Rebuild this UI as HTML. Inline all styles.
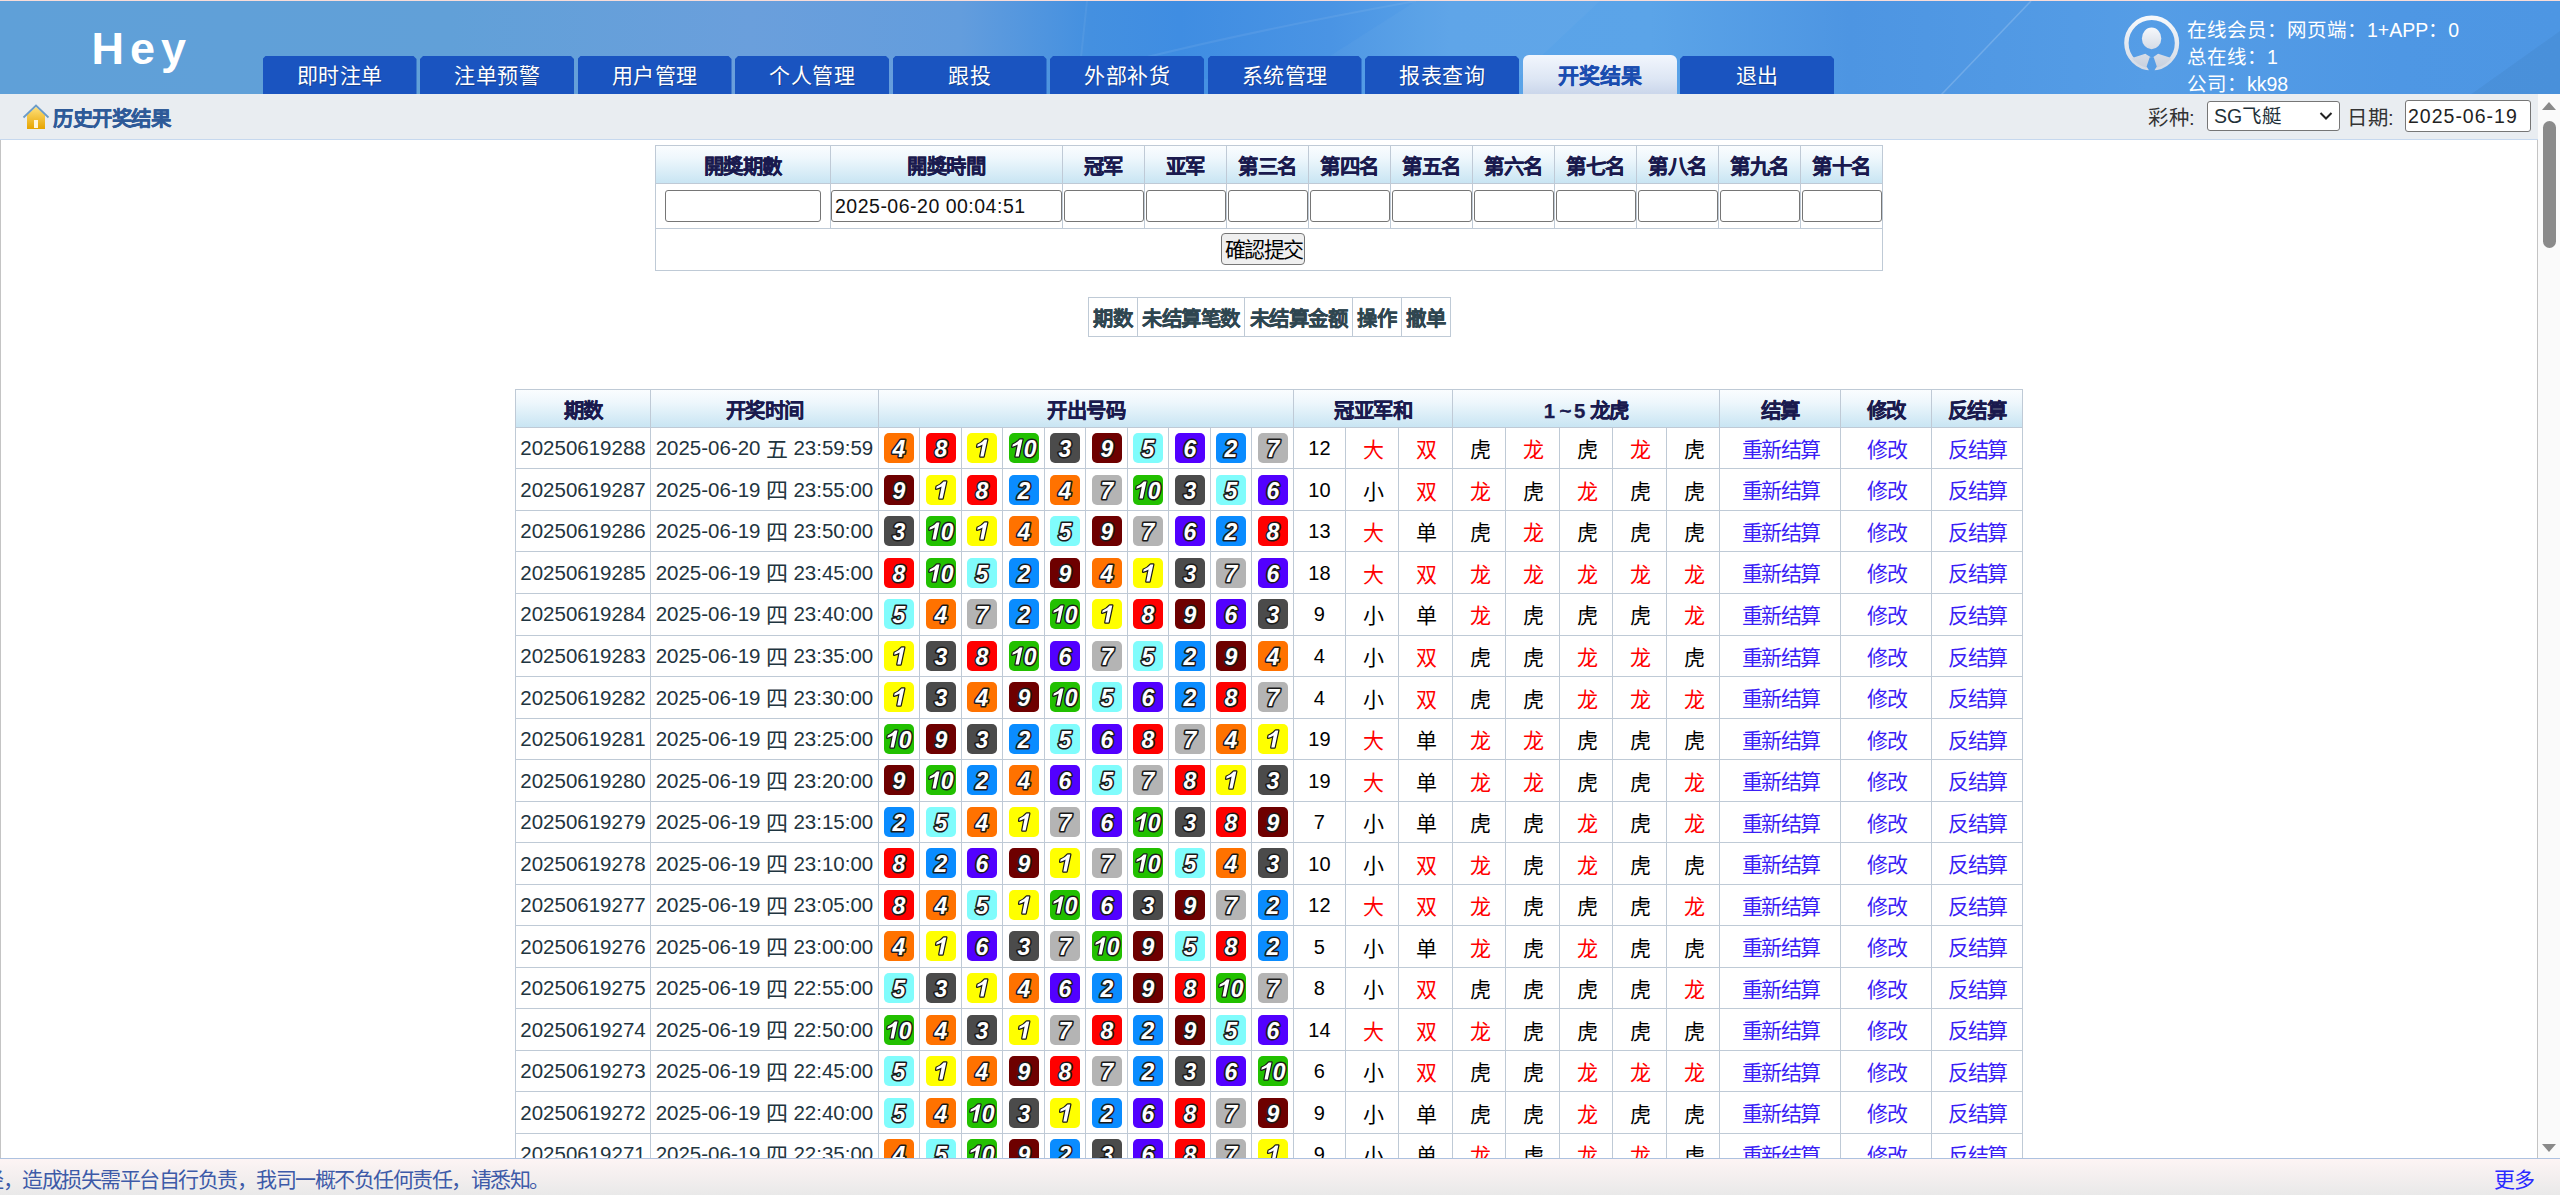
<!DOCTYPE html>
<html lang="zh-CN"><head><meta charset="utf-8">
<style>
*{margin:0;padding:0;box-sizing:border-box}
html,body{width:2560px;height:1199px;overflow:hidden;background:#fff;font-family:"Liberation Sans", sans-serif}
.abs{position:absolute}
#hdr{position:absolute;left:0;top:0;width:2560px;height:94px;border-top:1px solid #f8dcd8;
 background:linear-gradient(90deg,#5fa0d8 0px,#61a0d8 450px,#6a9fdc 750px,#639ddd 960px,#4490e0 1090px,#3f8de2 1180px,#4a94e4 1330px,#5aa3e8 1450px,#5ba4e8 1650px,#4d95e2 1850px,#559de6 2150px,#4e97e4 2400px,#4d96e3 2560px);overflow:hidden}
.logo{position:absolute;left:91.5px;top:22px;font:bold 45px "Liberation Sans", sans-serif;color:#fff;letter-spacing:6px}
.tab{position:absolute;top:55px;width:154px;height:39px;background:#1a54c0;color:#fff;font-size:21px;letter-spacing:0.5px;padding-left:0.5px;text-align:center;line-height:40px;
 clip-path:polygon(3px 0,151px 0,154px 3px,154px 39px,0 39px,0 3px);text-shadow:1px 1px 0 rgba(0,0,0,.25)}
.tab.act{top:54px;height:40px;background:linear-gradient(#f2f6fd,#dde6f4 60%,#c9d5ea);color:#1a4db0;font-weight:bold;font-size:21px;letter-spacing:0;-webkit-text-stroke:0.25px #1a4db0;border-radius:6px 6px 0 0;clip-path:none;text-shadow:none;line-height:42px}
.uinfo{position:absolute;left:2187px;top:16px;color:#fff;font-size:19.5px;line-height:27px;white-space:nowrap}
#sub{position:absolute;left:0;top:94px;width:2538px;height:46px;background:#e9edf1;border-bottom:1px solid #c6d8ee}
.ttl{position:absolute;left:53px;top:7.5px;font-size:20.4px;letter-spacing:-0.5px;font-weight:bold;color:#2e5a98;-webkit-text-stroke:0.25px #2e5a98}
.lbl{position:absolute;top:7px;font-size:20.4px;letter-spacing:0.5px;color:#333}
#cont{position:absolute;left:0;top:140px;width:2538px;height:1018px;overflow:hidden;background:#fff}
#sb{position:absolute;left:2538px;top:94px;width:22px;height:1064px;background:#fafafa}
#foot{position:absolute;left:0;top:1158px;width:2560px;height:37px;border-top:1px solid #aec2e0;background:linear-gradient(#fdf4f4,#e9e9e9)}
.cell{position:absolute;text-align:center;white-space:nowrap}
.th{font-weight:bold;color:#1a1a4e;font-size:20.4px;letter-spacing:-0.5px;padding-left:0.5px;-webkit-text-stroke:0.25px #1a1a4e}
.ball{position:absolute;width:30px;height:30px;border-radius:5px;color:#fff;font:italic bold 23px/30px "Liberation Sans", sans-serif;text-align:center;letter-spacing:-1px;
 text-shadow:-1px -1px 0 #222,1px -1px 0 #222,-1px 1px 0 #222,1px 1px 0 #222,0 1px 0 #222,0 -1px 0 #222,1px 0 0 #222,-1px 0 0 #222}
.bt{font:italic bold 23px "Liberation Sans", sans-serif;fill:#fff;stroke:#1a1a1a;stroke-width:3.2px;stroke-linejoin:round;paint-order:stroke;text-anchor:middle}
.bo{fill:#fff;stroke:#1a1a1a;stroke-width:2.4px;stroke-linejoin:round;paint-order:stroke}
.inp{position:absolute;height:32px;border:1px solid #767676;border-radius:3px;background:#fff}
</style></head><body>

<div id="hdr">
<svg class="abs" style="left:0;top:0" width="2560" height="94"><path d="M1087 0 L1077 94" stroke="#fff" stroke-opacity=".06" stroke-width="2"/><path d="M1416 0 L1330 55 L1120 94 L1500 94 L1600 0 Z" fill="#fff" fill-opacity=".03"/><path d="M1131 60 Q1250 30 1416 0" stroke="#fff" stroke-opacity=".07" stroke-width="2" fill="none"/><path d="M2031 0 L1941 94" stroke="#fff" stroke-opacity=".18" stroke-width="1.5"/><path d="M2560 30 L2470 94 L2560 94 Z" fill="#000" fill-opacity=".04"/></svg>
<div class="logo">Hey</div>
<div class="tab" style="left:262.5px">即时注单</div>
<div class="tab" style="left:420.0px">注单预警</div>
<div class="tab" style="left:577.5px">用户管理</div>
<div class="tab" style="left:735.0px">个人管理</div>
<div class="tab" style="left:892.5px">跟投</div>
<div class="tab" style="left:1050.0px">外部补货</div>
<div class="tab" style="left:1207.5px">系统管理</div>
<div class="tab" style="left:1365.0px">报表查询</div>
<div class="tab act" style="left:1522.5px">开奖结果</div>
<div class="tab" style="left:1680.0px">退出</div>
<svg class="abs" style="left:2122px;top:13px" width="60" height="60" viewBox="0 0 60 60">
<defs><linearGradient id="ag" x1="0" y1="0" x2="0" y2="1"><stop offset="0" stop-color="#f6f8fb"/><stop offset="1" stop-color="#d4dbe6"/></linearGradient>
<linearGradient id="bg2" x1="0" y1="0" x2="0" y2="1"><stop offset="0" stop-color="#d6dde8"/><stop offset="1" stop-color="#c2cad8"/></linearGradient>
<clipPath id="cc"><circle cx="29.7" cy="29.1" r="25"/></clipPath><mask id="tie"><rect width="60" height="60" fill="#fff"/><path d="M27.7 43.3 L31.7 43.3 L34.8 52.6 L32.6 56 L32.2 60 L27.2 60 L26.8 56 L24.6 52.6 Z" fill="#000"/></mask></defs><g mask="url(#tie)">
<circle cx="29.7" cy="29.1" r="25.3" fill="none" stroke="url(#ag)" stroke-width="4.4"/>
<ellipse cx="29.6" cy="24.4" rx="9.7" ry="10.8" fill="url(#ag)"/>
<g clip-path="url(#cc)" fill="url(#bg2)"><path d="M6 47 L10.9 43.8 L23.3 39.7 L30 44 L36.1 39.7 L48.5 43.8 L53.4 47 L60 60 L0 60 Z"/></g></g>
</svg>
<div class="uinfo">在线会员：网页端：1+APP：0<br>总在线：1<br>公司：kk98</div>
</div>
<div id="sub">
<svg class="abs" style="left:22px;top:10px" width="28" height="26" viewBox="0 0 28 26">
<defs><linearGradient id="hg" x1="0" y1="0" x2="0" y2="1"><stop offset="0" stop-color="#ffe07a"/><stop offset="1" stop-color="#e6a400"/></linearGradient></defs>
<path d="M5 11 L14 3 L23 11 L23 25 L5 25 Z" fill="url(#hg)"/>
<rect x="12" y="16" width="4" height="8" fill="#fff6dc"/>
<path d="M1.5 13.5 L14 1.5 L26.5 13.5" fill="none" stroke="#6c9cc8" stroke-width="1.8"/>
</svg>
<div class="ttl">历史开奖结果</div>
<div class="lbl" style="left:2148px">彩种:</div>
<div class="abs" style="left:2207px;top:7px;width:133px;height:30px;border:1px solid #767676;border-radius:3px;background:#fff;font-size:19.5px;line-height:28px;padding-left:6px;color:#1e3038">SG飞艇<svg class="abs" style="left:111px;top:9px" width="14" height="10" viewBox="0 0 14 10"><path d="M1.5 2 L7 7.5 L12.5 2" fill="none" stroke="#222" stroke-width="2"/></svg></div>
<div class="lbl" style="left:2347px">日期:</div>
<div class="abs" style="left:2405px;top:6px;width:126px;height:32px;border:1px solid #767676;border-radius:3px;background:#fff;font-size:19.5px;line-height:30px;padding-left:2px;letter-spacing:1px;color:#222">2025-06-19</div>
</div>
<div id="cont">
<div class="abs" style="left:655px;top:5px;width:1227px;height:38px;background:linear-gradient(#fbfdff,#eef7fc 35%,#c9e5f3)"></div>
<div style="position:absolute;left:655px;top:5px;width:1228px;height:1px;background:#bfcad6"></div>
<div style="position:absolute;left:655px;top:43px;width:1228px;height:1px;background:#bfcad6"></div>
<div style="position:absolute;left:655px;top:88px;width:1228px;height:1px;background:#bfcad6"></div>
<div style="position:absolute;left:655px;top:130px;width:1228px;height:1px;background:#bfcad6"></div>
<div style="position:absolute;left:655px;top:5px;width:1px;height:83px;background:#bfcad6"></div>
<div style="position:absolute;left:830px;top:5px;width:1px;height:83px;background:#bfcad6"></div>
<div style="position:absolute;left:1062px;top:5px;width:1px;height:83px;background:#bfcad6"></div>
<div style="position:absolute;left:1144px;top:5px;width:1px;height:83px;background:#bfcad6"></div>
<div style="position:absolute;left:1226px;top:5px;width:1px;height:83px;background:#bfcad6"></div>
<div style="position:absolute;left:1308px;top:5px;width:1px;height:83px;background:#bfcad6"></div>
<div style="position:absolute;left:1390px;top:5px;width:1px;height:83px;background:#bfcad6"></div>
<div style="position:absolute;left:1472px;top:5px;width:1px;height:83px;background:#bfcad6"></div>
<div style="position:absolute;left:1554px;top:5px;width:1px;height:83px;background:#bfcad6"></div>
<div style="position:absolute;left:1636px;top:5px;width:1px;height:83px;background:#bfcad6"></div>
<div style="position:absolute;left:1718px;top:5px;width:1px;height:83px;background:#bfcad6"></div>
<div style="position:absolute;left:1800px;top:5px;width:1px;height:83px;background:#bfcad6"></div>
<div style="position:absolute;left:1882px;top:5px;width:1px;height:83px;background:#bfcad6"></div>
<div style="position:absolute;left:655px;top:88px;width:1px;height:42px;background:#bfcad6"></div>
<div style="position:absolute;left:1882px;top:88px;width:1px;height:42px;background:#bfcad6"></div>
<div class="cell th" style="left:655px;width:175px;top:14px;line-height:26px">開獎期數</div>
<div class="cell th" style="left:830px;width:232px;top:14px;line-height:26px">開獎時間</div>
<div class="cell th" style="left:1062px;width:82px;top:14px;line-height:26px">冠军</div>
<div class="cell th" style="left:1144px;width:82px;top:14px;line-height:26px">亚军</div>
<div class="cell th" style="left:1226px;width:82px;top:14px;line-height:26px">第三名</div>
<div class="cell th" style="left:1308px;width:82px;top:14px;line-height:26px">第四名</div>
<div class="cell th" style="left:1390px;width:82px;top:14px;line-height:26px">第五名</div>
<div class="cell th" style="left:1472px;width:82px;top:14px;line-height:26px">第六名</div>
<div class="cell th" style="left:1554px;width:82px;top:14px;line-height:26px">第七名</div>
<div class="cell th" style="left:1636px;width:82px;top:14px;line-height:26px">第八名</div>
<div class="cell th" style="left:1718px;width:82px;top:14px;line-height:26px">第九名</div>
<div class="cell th" style="left:1800px;width:82px;top:14px;line-height:26px">第十名</div>
<div class="inp" style="left:665px;top:50px;width:156px"></div>
<div class="inp" style="left:831px;top:50px;width:231px;font-size:19.5px;line-height:30px;padding-left:3px;letter-spacing:0.5px;color:#111">2025-06-20 00:04:51</div>
<div class="inp" style="left:1063.5px;top:50px;width:80px"></div>
<div class="inp" style="left:1145.5px;top:50px;width:80px"></div>
<div class="inp" style="left:1227.5px;top:50px;width:80px"></div>
<div class="inp" style="left:1309.5px;top:50px;width:80px"></div>
<div class="inp" style="left:1391.5px;top:50px;width:80px"></div>
<div class="inp" style="left:1473.5px;top:50px;width:80px"></div>
<div class="inp" style="left:1555.5px;top:50px;width:80px"></div>
<div class="inp" style="left:1637.5px;top:50px;width:80px"></div>
<div class="inp" style="left:1719.5px;top:50px;width:80px"></div>
<div class="inp" style="left:1801.5px;top:50px;width:80px"></div>
<div class="abs" style="left:1221px;top:93px;width:84px;height:32px;border:1px solid #767676;border-radius:4px;background:#efefef;font-size:21px;letter-spacing:-1.5px;padding-left:1.5px;line-height:32px;text-align:center;color:#000">確認提交</div>
<div style="position:absolute;left:1088px;top:157px;width:363px;height:1px;background:#bfcad6"></div>
<div style="position:absolute;left:1088px;top:196px;width:363px;height:1px;background:#bfcad6"></div>
<div style="position:absolute;left:1088px;top:157px;width:1px;height:40px;background:#bfcad6"></div>
<div style="position:absolute;left:1137px;top:157px;width:1px;height:40px;background:#bfcad6"></div>
<div style="position:absolute;left:1244px;top:157px;width:1px;height:40px;background:#bfcad6"></div>
<div style="position:absolute;left:1352px;top:157px;width:1px;height:40px;background:#bfcad6"></div>
<div style="position:absolute;left:1401px;top:157px;width:1px;height:40px;background:#bfcad6"></div>
<div style="position:absolute;left:1450px;top:157px;width:1px;height:40px;background:#bfcad6"></div>
<div class="cell" style="left:1088px;width:49px;top:165.5px;line-height:26px;font-weight:bold;font-size:20.4px;letter-spacing:-0.5px;padding-left:0.5px;color:#2f4650;-webkit-text-stroke:0.25px #2f4650">期数</div>
<div class="cell" style="left:1137px;width:107px;top:165.5px;line-height:26px;font-weight:bold;font-size:20.4px;letter-spacing:-0.5px;padding-left:0.5px;color:#2f4650;-webkit-text-stroke:0.25px #2f4650">未结算笔数</div>
<div class="cell" style="left:1244px;width:108px;top:165.5px;line-height:26px;font-weight:bold;font-size:20.4px;letter-spacing:-0.5px;padding-left:0.5px;color:#2f4650;-webkit-text-stroke:0.25px #2f4650">未结算金额</div>
<div class="cell" style="left:1352px;width:49px;top:165.5px;line-height:26px;font-weight:bold;font-size:20.4px;letter-spacing:-0.5px;padding-left:0.5px;color:#2f4650;-webkit-text-stroke:0.25px #2f4650">操作</div>
<div class="cell" style="left:1401px;width:49px;top:165.5px;line-height:26px;font-weight:bold;font-size:20.4px;letter-spacing:-0.5px;padding-left:0.5px;color:#2f4650;-webkit-text-stroke:0.25px #2f4650">撤单</div>
<div class="abs" style="left:515.5px;top:249.3px;width:1506.5px;height:38.0px;background:linear-gradient(#fbfdff,#eef7fc 35%,#c9e5f3)"></div>
<div style="position:absolute;left:515px;top:249px;width:1508px;height:1px;background:#bfcad6"></div>
<div style="position:absolute;left:515px;top:287px;width:1508px;height:1px;background:#bfcad6"></div>
<div style="position:absolute;left:515px;top:328px;width:1508px;height:1px;background:#bfcad6"></div>
<div style="position:absolute;left:515px;top:370px;width:1508px;height:1px;background:#bfcad6"></div>
<div style="position:absolute;left:515px;top:411px;width:1508px;height:1px;background:#bfcad6"></div>
<div style="position:absolute;left:515px;top:453px;width:1508px;height:1px;background:#bfcad6"></div>
<div style="position:absolute;left:515px;top:495px;width:1508px;height:1px;background:#bfcad6"></div>
<div style="position:absolute;left:515px;top:536px;width:1508px;height:1px;background:#bfcad6"></div>
<div style="position:absolute;left:515px;top:578px;width:1508px;height:1px;background:#bfcad6"></div>
<div style="position:absolute;left:515px;top:619px;width:1508px;height:1px;background:#bfcad6"></div>
<div style="position:absolute;left:515px;top:661px;width:1508px;height:1px;background:#bfcad6"></div>
<div style="position:absolute;left:515px;top:702px;width:1508px;height:1px;background:#bfcad6"></div>
<div style="position:absolute;left:515px;top:744px;width:1508px;height:1px;background:#bfcad6"></div>
<div style="position:absolute;left:515px;top:785px;width:1508px;height:1px;background:#bfcad6"></div>
<div style="position:absolute;left:515px;top:827px;width:1508px;height:1px;background:#bfcad6"></div>
<div style="position:absolute;left:515px;top:868px;width:1508px;height:1px;background:#bfcad6"></div>
<div style="position:absolute;left:515px;top:910px;width:1508px;height:1px;background:#bfcad6"></div>
<div style="position:absolute;left:515px;top:951px;width:1508px;height:1px;background:#bfcad6"></div>
<div style="position:absolute;left:515px;top:993px;width:1508px;height:1px;background:#bfcad6"></div>
<div style="position:absolute;left:515px;top:1035px;width:1508px;height:1px;background:#bfcad6"></div>
<div style="position:absolute;left:515px;top:249.3px;width:1px;height:38.0px;background:#bfcad6"></div>
<div style="position:absolute;left:650px;top:249.3px;width:1px;height:38.0px;background:#bfcad6"></div>
<div style="position:absolute;left:878px;top:249.3px;width:1px;height:38.0px;background:#bfcad6"></div>
<div style="position:absolute;left:1293px;top:249.3px;width:1px;height:38.0px;background:#bfcad6"></div>
<div style="position:absolute;left:1452px;top:249.3px;width:1px;height:38.0px;background:#bfcad6"></div>
<div style="position:absolute;left:1719px;top:249.3px;width:1px;height:38.0px;background:#bfcad6"></div>
<div style="position:absolute;left:1840px;top:249.3px;width:1px;height:38.0px;background:#bfcad6"></div>
<div style="position:absolute;left:1931px;top:249.3px;width:1px;height:38.0px;background:#bfcad6"></div>
<div style="position:absolute;left:2022px;top:249.3px;width:1px;height:38.0px;background:#bfcad6"></div>
<div style="position:absolute;left:515px;top:287.3px;width:1px;height:747.72px;background:#bfcad6"></div>
<div style="position:absolute;left:650px;top:287.3px;width:1px;height:747.72px;background:#bfcad6"></div>
<div style="position:absolute;left:878px;top:287.3px;width:1px;height:747.72px;background:#bfcad6"></div>
<div style="position:absolute;left:919px;top:287.3px;width:1px;height:747.72px;background:#bfcad6"></div>
<div style="position:absolute;left:961px;top:287.3px;width:1px;height:747.72px;background:#bfcad6"></div>
<div style="position:absolute;left:1002px;top:287.3px;width:1px;height:747.72px;background:#bfcad6"></div>
<div style="position:absolute;left:1044px;top:287.3px;width:1px;height:747.72px;background:#bfcad6"></div>
<div style="position:absolute;left:1085px;top:287.3px;width:1px;height:747.72px;background:#bfcad6"></div>
<div style="position:absolute;left:1127px;top:287.3px;width:1px;height:747.72px;background:#bfcad6"></div>
<div style="position:absolute;left:1168px;top:287.3px;width:1px;height:747.72px;background:#bfcad6"></div>
<div style="position:absolute;left:1210px;top:287.3px;width:1px;height:747.72px;background:#bfcad6"></div>
<div style="position:absolute;left:1251px;top:287.3px;width:1px;height:747.72px;background:#bfcad6"></div>
<div style="position:absolute;left:1293px;top:287.3px;width:1px;height:747.72px;background:#bfcad6"></div>
<div style="position:absolute;left:1345px;top:287.3px;width:1px;height:747.72px;background:#bfcad6"></div>
<div style="position:absolute;left:1398px;top:287.3px;width:1px;height:747.72px;background:#bfcad6"></div>
<div style="position:absolute;left:1452px;top:287.3px;width:1px;height:747.72px;background:#bfcad6"></div>
<div style="position:absolute;left:1505px;top:287.3px;width:1px;height:747.72px;background:#bfcad6"></div>
<div style="position:absolute;left:1559px;top:287.3px;width:1px;height:747.72px;background:#bfcad6"></div>
<div style="position:absolute;left:1612px;top:287.3px;width:1px;height:747.72px;background:#bfcad6"></div>
<div style="position:absolute;left:1666px;top:287.3px;width:1px;height:747.72px;background:#bfcad6"></div>
<div style="position:absolute;left:1719px;top:287.3px;width:1px;height:747.72px;background:#bfcad6"></div>
<div style="position:absolute;left:1840px;top:287.3px;width:1px;height:747.72px;background:#bfcad6"></div>
<div style="position:absolute;left:1931px;top:287.3px;width:1px;height:747.72px;background:#bfcad6"></div>
<div style="position:absolute;left:2022px;top:287.3px;width:1px;height:747.72px;background:#bfcad6"></div>
<div class="cell th" style="left:515.5px;width:135.0px;top:257.8px;line-height:26px">期数</div>
<div class="cell th" style="left:650.5px;width:227.89999999999998px;top:257.8px;line-height:26px">开奖时间</div>
<div class="cell th" style="left:878.4px;width:415.0000000000001px;top:257.8px;line-height:26px">开出号码</div>
<div class="cell th" style="left:1293.4px;width:159.0999999999999px;top:257.8px;line-height:26px">冠亚军和</div>
<div class="cell th" style="left:1452.5px;width:267.0999999999999px;top:257.8px;line-height:26px">1<span style="display:inline-block;margin:0 3px 0 5px;font-weight:normal;-webkit-text-stroke:0.8px #1a1a4e">~</span>5 龙虎</div>
<div class="cell th" style="left:1719.6px;width:121.0px;top:257.8px;line-height:26px">结算</div>
<div class="cell th" style="left:1840.6px;width:90.80000000000018px;top:257.8px;line-height:26px">修改</div>
<div class="cell th" style="left:1931.4px;width:90.59999999999991px;top:257.8px;line-height:26px">反结算</div>
<div class="cell" style="left:515.5px;width:135.0px;top:295.3px;line-height:26px;font-size:20.5px;color:#1f3540">20250619288</div>
<div class="cell" style="left:650.5px;width:227.89999999999998px;top:295.3px;line-height:26px;font-size:20.5px;color:#1f3540">2025-06-20 <span style="font-size:22px;letter-spacing:-0.5px;position:relative;top:1.5px">五</span> 23:59:59</div>
<svg class="abs" style="left:884.0px;top:293.0px" width="30" height="30"><rect width="30" height="30" rx="5" fill="#ff7200"/><text class="bt" x="15" y="24">4</text></svg>
<svg class="abs" style="left:925.5px;top:293.0px" width="30" height="30"><rect width="30" height="30" rx="5" fill="#ff0000"/><text class="bt" x="15" y="24">8</text></svg>
<svg class="abs" style="left:967.0px;top:293.0px" width="30" height="30"><rect width="30" height="30" rx="5" fill="#ffff00"/><path class="bo" d="M13.3 23.6 L16.6 23.6 L20.3 6.4 L17.6 6.4 Q14.8 9.8 10.6 11.6 L10.1 13.8 Q13.2 13 15.6 11.6 Z"/></svg>
<svg class="abs" style="left:1008.5px;top:293.0px" width="30" height="30"><rect width="30" height="30" rx="5" fill="#22c000"/><path class="bo" d="M6.5 23.6 L9.8 23.6 L13.5 6.4 L10.8 6.4 Q8 9.8 3.8 11.6 L3.3 13.8 Q6.4 13 8.8 11.6 Z"/><text class="bt" x="21.2" y="24">0</text></svg>
<svg class="abs" style="left:1050.0px;top:293.0px" width="30" height="30"><rect width="30" height="30" rx="5" fill="#4b4b4b"/><text class="bt" x="15" y="24">3</text></svg>
<svg class="abs" style="left:1091.5px;top:293.0px" width="30" height="30"><rect width="30" height="30" rx="5" fill="#6e0000"/><text class="bt" x="15" y="24">9</text></svg>
<svg class="abs" style="left:1133.0px;top:293.0px" width="30" height="30"><rect width="30" height="30" rx="5" fill="#80fcfc"/><text class="bt" x="15" y="24">5</text></svg>
<svg class="abs" style="left:1174.5px;top:293.0px" width="30" height="30"><rect width="30" height="30" rx="5" fill="#5200ff"/><text class="bt" x="15" y="24">6</text></svg>
<svg class="abs" style="left:1216.0px;top:293.0px" width="30" height="30"><rect width="30" height="30" rx="5" fill="#0a8cff"/><text class="bt" x="15" y="24">2</text></svg>
<svg class="abs" style="left:1257.5px;top:293.0px" width="30" height="30"><rect width="30" height="30" rx="5" fill="#b4b4b4"/><text class="bt" x="15" y="24">7</text></svg>
<div class="cell" style="left:1293.4px;width:52.0px;top:295.3px;line-height:26px;font-size:20px;color:#000">12</div>
<div class="cell" style="left:1345.4px;width:53.0px;top:297.3px;line-height:26px;font-size:21px;padding-left:1.5px;letter-spacing:-1.5px;color:#f00">大</div>
<div class="cell" style="left:1398.4px;width:54.09999999999991px;top:297.3px;line-height:26px;font-size:21px;padding-left:1.5px;letter-spacing:-1.5px;color:#f00">双</div>
<div class="cell" style="left:1452.5px;width:52.90000000000009px;top:297.3px;line-height:26px;font-size:21px;padding-left:1.5px;letter-spacing:-1.5px;color:#000">虎</div>
<div class="cell" style="left:1505.4px;width:53.69999999999982px;top:297.3px;line-height:26px;font-size:21px;padding-left:1.5px;letter-spacing:-1.5px;color:#f00">龙</div>
<div class="cell" style="left:1559.1px;width:53.30000000000018px;top:297.3px;line-height:26px;font-size:21px;padding-left:1.5px;letter-spacing:-1.5px;color:#000">虎</div>
<div class="cell" style="left:1612.4px;width:53.899999999999864px;top:297.3px;line-height:26px;font-size:21px;padding-left:1.5px;letter-spacing:-1.5px;color:#f00">龙</div>
<div class="cell" style="left:1666.3px;width:53.299999999999955px;top:297.3px;line-height:26px;font-size:21px;padding-left:1.5px;letter-spacing:-1.5px;color:#000">虎</div>
<div class="cell" style="left:1719.6px;width:121.0px;top:296.8px;line-height:26px;font-size:21px;letter-spacing:-1.5px;padding-left:1.5px;color:#3a1ef5">重新结算</div>
<div class="cell" style="left:1840.6px;width:90.80000000000018px;top:296.8px;line-height:26px;font-size:21px;letter-spacing:-1.5px;padding-left:1.5px;color:#3a1ef5">修改</div>
<div class="cell" style="left:1931.4px;width:90.59999999999991px;top:296.8px;line-height:26px;font-size:21px;letter-spacing:-1.5px;padding-left:1.5px;color:#3a1ef5">反结算</div>
<div class="cell" style="left:515.5px;width:135.0px;top:336.84px;line-height:26px;font-size:20.5px;color:#1f3540">20250619287</div>
<div class="cell" style="left:650.5px;width:227.89999999999998px;top:336.84px;line-height:26px;font-size:20.5px;color:#1f3540">2025-06-19 <span style="font-size:22px;letter-spacing:-0.5px;position:relative;top:1.5px">四</span> 23:55:00</div>
<svg class="abs" style="left:884.0px;top:334.53999999999996px" width="30" height="30"><rect width="30" height="30" rx="5" fill="#6e0000"/><text class="bt" x="15" y="24">9</text></svg>
<svg class="abs" style="left:925.5px;top:334.53999999999996px" width="30" height="30"><rect width="30" height="30" rx="5" fill="#ffff00"/><path class="bo" d="M13.3 23.6 L16.6 23.6 L20.3 6.4 L17.6 6.4 Q14.8 9.8 10.6 11.6 L10.1 13.8 Q13.2 13 15.6 11.6 Z"/></svg>
<svg class="abs" style="left:967.0px;top:334.53999999999996px" width="30" height="30"><rect width="30" height="30" rx="5" fill="#ff0000"/><text class="bt" x="15" y="24">8</text></svg>
<svg class="abs" style="left:1008.5px;top:334.53999999999996px" width="30" height="30"><rect width="30" height="30" rx="5" fill="#0a8cff"/><text class="bt" x="15" y="24">2</text></svg>
<svg class="abs" style="left:1050.0px;top:334.53999999999996px" width="30" height="30"><rect width="30" height="30" rx="5" fill="#ff7200"/><text class="bt" x="15" y="24">4</text></svg>
<svg class="abs" style="left:1091.5px;top:334.53999999999996px" width="30" height="30"><rect width="30" height="30" rx="5" fill="#b4b4b4"/><text class="bt" x="15" y="24">7</text></svg>
<svg class="abs" style="left:1133.0px;top:334.53999999999996px" width="30" height="30"><rect width="30" height="30" rx="5" fill="#22c000"/><path class="bo" d="M6.5 23.6 L9.8 23.6 L13.5 6.4 L10.8 6.4 Q8 9.8 3.8 11.6 L3.3 13.8 Q6.4 13 8.8 11.6 Z"/><text class="bt" x="21.2" y="24">0</text></svg>
<svg class="abs" style="left:1174.5px;top:334.53999999999996px" width="30" height="30"><rect width="30" height="30" rx="5" fill="#4b4b4b"/><text class="bt" x="15" y="24">3</text></svg>
<svg class="abs" style="left:1216.0px;top:334.53999999999996px" width="30" height="30"><rect width="30" height="30" rx="5" fill="#80fcfc"/><text class="bt" x="15" y="24">5</text></svg>
<svg class="abs" style="left:1257.5px;top:334.53999999999996px" width="30" height="30"><rect width="30" height="30" rx="5" fill="#5200ff"/><text class="bt" x="15" y="24">6</text></svg>
<div class="cell" style="left:1293.4px;width:52.0px;top:336.84px;line-height:26px;font-size:20px;color:#000">10</div>
<div class="cell" style="left:1345.4px;width:53.0px;top:338.84px;line-height:26px;font-size:21px;padding-left:1.5px;letter-spacing:-1.5px;color:#000">小</div>
<div class="cell" style="left:1398.4px;width:54.09999999999991px;top:338.84px;line-height:26px;font-size:21px;padding-left:1.5px;letter-spacing:-1.5px;color:#f00">双</div>
<div class="cell" style="left:1452.5px;width:52.90000000000009px;top:338.84px;line-height:26px;font-size:21px;padding-left:1.5px;letter-spacing:-1.5px;color:#f00">龙</div>
<div class="cell" style="left:1505.4px;width:53.69999999999982px;top:338.84px;line-height:26px;font-size:21px;padding-left:1.5px;letter-spacing:-1.5px;color:#000">虎</div>
<div class="cell" style="left:1559.1px;width:53.30000000000018px;top:338.84px;line-height:26px;font-size:21px;padding-left:1.5px;letter-spacing:-1.5px;color:#f00">龙</div>
<div class="cell" style="left:1612.4px;width:53.899999999999864px;top:338.84px;line-height:26px;font-size:21px;padding-left:1.5px;letter-spacing:-1.5px;color:#000">虎</div>
<div class="cell" style="left:1666.3px;width:53.299999999999955px;top:338.84px;line-height:26px;font-size:21px;padding-left:1.5px;letter-spacing:-1.5px;color:#000">虎</div>
<div class="cell" style="left:1719.6px;width:121.0px;top:338.34px;line-height:26px;font-size:21px;letter-spacing:-1.5px;padding-left:1.5px;color:#3a1ef5">重新结算</div>
<div class="cell" style="left:1840.6px;width:90.80000000000018px;top:338.34px;line-height:26px;font-size:21px;letter-spacing:-1.5px;padding-left:1.5px;color:#3a1ef5">修改</div>
<div class="cell" style="left:1931.4px;width:90.59999999999991px;top:338.34px;line-height:26px;font-size:21px;letter-spacing:-1.5px;padding-left:1.5px;color:#3a1ef5">反结算</div>
<div class="cell" style="left:515.5px;width:135.0px;top:378.38px;line-height:26px;font-size:20.5px;color:#1f3540">20250619286</div>
<div class="cell" style="left:650.5px;width:227.89999999999998px;top:378.38px;line-height:26px;font-size:20.5px;color:#1f3540">2025-06-19 <span style="font-size:22px;letter-spacing:-0.5px;position:relative;top:1.5px">四</span> 23:50:00</div>
<svg class="abs" style="left:884.0px;top:376.08px" width="30" height="30"><rect width="30" height="30" rx="5" fill="#4b4b4b"/><text class="bt" x="15" y="24">3</text></svg>
<svg class="abs" style="left:925.5px;top:376.08px" width="30" height="30"><rect width="30" height="30" rx="5" fill="#22c000"/><path class="bo" d="M6.5 23.6 L9.8 23.6 L13.5 6.4 L10.8 6.4 Q8 9.8 3.8 11.6 L3.3 13.8 Q6.4 13 8.8 11.6 Z"/><text class="bt" x="21.2" y="24">0</text></svg>
<svg class="abs" style="left:967.0px;top:376.08px" width="30" height="30"><rect width="30" height="30" rx="5" fill="#ffff00"/><path class="bo" d="M13.3 23.6 L16.6 23.6 L20.3 6.4 L17.6 6.4 Q14.8 9.8 10.6 11.6 L10.1 13.8 Q13.2 13 15.6 11.6 Z"/></svg>
<svg class="abs" style="left:1008.5px;top:376.08px" width="30" height="30"><rect width="30" height="30" rx="5" fill="#ff7200"/><text class="bt" x="15" y="24">4</text></svg>
<svg class="abs" style="left:1050.0px;top:376.08px" width="30" height="30"><rect width="30" height="30" rx="5" fill="#80fcfc"/><text class="bt" x="15" y="24">5</text></svg>
<svg class="abs" style="left:1091.5px;top:376.08px" width="30" height="30"><rect width="30" height="30" rx="5" fill="#6e0000"/><text class="bt" x="15" y="24">9</text></svg>
<svg class="abs" style="left:1133.0px;top:376.08px" width="30" height="30"><rect width="30" height="30" rx="5" fill="#b4b4b4"/><text class="bt" x="15" y="24">7</text></svg>
<svg class="abs" style="left:1174.5px;top:376.08px" width="30" height="30"><rect width="30" height="30" rx="5" fill="#5200ff"/><text class="bt" x="15" y="24">6</text></svg>
<svg class="abs" style="left:1216.0px;top:376.08px" width="30" height="30"><rect width="30" height="30" rx="5" fill="#0a8cff"/><text class="bt" x="15" y="24">2</text></svg>
<svg class="abs" style="left:1257.5px;top:376.08px" width="30" height="30"><rect width="30" height="30" rx="5" fill="#ff0000"/><text class="bt" x="15" y="24">8</text></svg>
<div class="cell" style="left:1293.4px;width:52.0px;top:378.38px;line-height:26px;font-size:20px;color:#000">13</div>
<div class="cell" style="left:1345.4px;width:53.0px;top:380.38px;line-height:26px;font-size:21px;padding-left:1.5px;letter-spacing:-1.5px;color:#f00">大</div>
<div class="cell" style="left:1398.4px;width:54.09999999999991px;top:380.38px;line-height:26px;font-size:21px;padding-left:1.5px;letter-spacing:-1.5px;color:#000">单</div>
<div class="cell" style="left:1452.5px;width:52.90000000000009px;top:380.38px;line-height:26px;font-size:21px;padding-left:1.5px;letter-spacing:-1.5px;color:#000">虎</div>
<div class="cell" style="left:1505.4px;width:53.69999999999982px;top:380.38px;line-height:26px;font-size:21px;padding-left:1.5px;letter-spacing:-1.5px;color:#f00">龙</div>
<div class="cell" style="left:1559.1px;width:53.30000000000018px;top:380.38px;line-height:26px;font-size:21px;padding-left:1.5px;letter-spacing:-1.5px;color:#000">虎</div>
<div class="cell" style="left:1612.4px;width:53.899999999999864px;top:380.38px;line-height:26px;font-size:21px;padding-left:1.5px;letter-spacing:-1.5px;color:#000">虎</div>
<div class="cell" style="left:1666.3px;width:53.299999999999955px;top:380.38px;line-height:26px;font-size:21px;padding-left:1.5px;letter-spacing:-1.5px;color:#000">虎</div>
<div class="cell" style="left:1719.6px;width:121.0px;top:379.88px;line-height:26px;font-size:21px;letter-spacing:-1.5px;padding-left:1.5px;color:#3a1ef5">重新结算</div>
<div class="cell" style="left:1840.6px;width:90.80000000000018px;top:379.88px;line-height:26px;font-size:21px;letter-spacing:-1.5px;padding-left:1.5px;color:#3a1ef5">修改</div>
<div class="cell" style="left:1931.4px;width:90.59999999999991px;top:379.88px;line-height:26px;font-size:21px;letter-spacing:-1.5px;padding-left:1.5px;color:#3a1ef5">反结算</div>
<div class="cell" style="left:515.5px;width:135.0px;top:419.92px;line-height:26px;font-size:20.5px;color:#1f3540">20250619285</div>
<div class="cell" style="left:650.5px;width:227.89999999999998px;top:419.92px;line-height:26px;font-size:20.5px;color:#1f3540">2025-06-19 <span style="font-size:22px;letter-spacing:-0.5px;position:relative;top:1.5px">四</span> 23:45:00</div>
<svg class="abs" style="left:884.0px;top:417.62px" width="30" height="30"><rect width="30" height="30" rx="5" fill="#ff0000"/><text class="bt" x="15" y="24">8</text></svg>
<svg class="abs" style="left:925.5px;top:417.62px" width="30" height="30"><rect width="30" height="30" rx="5" fill="#22c000"/><path class="bo" d="M6.5 23.6 L9.8 23.6 L13.5 6.4 L10.8 6.4 Q8 9.8 3.8 11.6 L3.3 13.8 Q6.4 13 8.8 11.6 Z"/><text class="bt" x="21.2" y="24">0</text></svg>
<svg class="abs" style="left:967.0px;top:417.62px" width="30" height="30"><rect width="30" height="30" rx="5" fill="#80fcfc"/><text class="bt" x="15" y="24">5</text></svg>
<svg class="abs" style="left:1008.5px;top:417.62px" width="30" height="30"><rect width="30" height="30" rx="5" fill="#0a8cff"/><text class="bt" x="15" y="24">2</text></svg>
<svg class="abs" style="left:1050.0px;top:417.62px" width="30" height="30"><rect width="30" height="30" rx="5" fill="#6e0000"/><text class="bt" x="15" y="24">9</text></svg>
<svg class="abs" style="left:1091.5px;top:417.62px" width="30" height="30"><rect width="30" height="30" rx="5" fill="#ff7200"/><text class="bt" x="15" y="24">4</text></svg>
<svg class="abs" style="left:1133.0px;top:417.62px" width="30" height="30"><rect width="30" height="30" rx="5" fill="#ffff00"/><path class="bo" d="M13.3 23.6 L16.6 23.6 L20.3 6.4 L17.6 6.4 Q14.8 9.8 10.6 11.6 L10.1 13.8 Q13.2 13 15.6 11.6 Z"/></svg>
<svg class="abs" style="left:1174.5px;top:417.62px" width="30" height="30"><rect width="30" height="30" rx="5" fill="#4b4b4b"/><text class="bt" x="15" y="24">3</text></svg>
<svg class="abs" style="left:1216.0px;top:417.62px" width="30" height="30"><rect width="30" height="30" rx="5" fill="#b4b4b4"/><text class="bt" x="15" y="24">7</text></svg>
<svg class="abs" style="left:1257.5px;top:417.62px" width="30" height="30"><rect width="30" height="30" rx="5" fill="#5200ff"/><text class="bt" x="15" y="24">6</text></svg>
<div class="cell" style="left:1293.4px;width:52.0px;top:419.92px;line-height:26px;font-size:20px;color:#000">18</div>
<div class="cell" style="left:1345.4px;width:53.0px;top:421.92px;line-height:26px;font-size:21px;padding-left:1.5px;letter-spacing:-1.5px;color:#f00">大</div>
<div class="cell" style="left:1398.4px;width:54.09999999999991px;top:421.92px;line-height:26px;font-size:21px;padding-left:1.5px;letter-spacing:-1.5px;color:#f00">双</div>
<div class="cell" style="left:1452.5px;width:52.90000000000009px;top:421.92px;line-height:26px;font-size:21px;padding-left:1.5px;letter-spacing:-1.5px;color:#f00">龙</div>
<div class="cell" style="left:1505.4px;width:53.69999999999982px;top:421.92px;line-height:26px;font-size:21px;padding-left:1.5px;letter-spacing:-1.5px;color:#f00">龙</div>
<div class="cell" style="left:1559.1px;width:53.30000000000018px;top:421.92px;line-height:26px;font-size:21px;padding-left:1.5px;letter-spacing:-1.5px;color:#f00">龙</div>
<div class="cell" style="left:1612.4px;width:53.899999999999864px;top:421.92px;line-height:26px;font-size:21px;padding-left:1.5px;letter-spacing:-1.5px;color:#f00">龙</div>
<div class="cell" style="left:1666.3px;width:53.299999999999955px;top:421.92px;line-height:26px;font-size:21px;padding-left:1.5px;letter-spacing:-1.5px;color:#f00">龙</div>
<div class="cell" style="left:1719.6px;width:121.0px;top:421.42px;line-height:26px;font-size:21px;letter-spacing:-1.5px;padding-left:1.5px;color:#3a1ef5">重新结算</div>
<div class="cell" style="left:1840.6px;width:90.80000000000018px;top:421.42px;line-height:26px;font-size:21px;letter-spacing:-1.5px;padding-left:1.5px;color:#3a1ef5">修改</div>
<div class="cell" style="left:1931.4px;width:90.59999999999991px;top:421.42px;line-height:26px;font-size:21px;letter-spacing:-1.5px;padding-left:1.5px;color:#3a1ef5">反结算</div>
<div class="cell" style="left:515.5px;width:135.0px;top:461.46px;line-height:26px;font-size:20.5px;color:#1f3540">20250619284</div>
<div class="cell" style="left:650.5px;width:227.89999999999998px;top:461.46px;line-height:26px;font-size:20.5px;color:#1f3540">2025-06-19 <span style="font-size:22px;letter-spacing:-0.5px;position:relative;top:1.5px">四</span> 23:40:00</div>
<svg class="abs" style="left:884.0px;top:459.15999999999997px" width="30" height="30"><rect width="30" height="30" rx="5" fill="#80fcfc"/><text class="bt" x="15" y="24">5</text></svg>
<svg class="abs" style="left:925.5px;top:459.15999999999997px" width="30" height="30"><rect width="30" height="30" rx="5" fill="#ff7200"/><text class="bt" x="15" y="24">4</text></svg>
<svg class="abs" style="left:967.0px;top:459.15999999999997px" width="30" height="30"><rect width="30" height="30" rx="5" fill="#b4b4b4"/><text class="bt" x="15" y="24">7</text></svg>
<svg class="abs" style="left:1008.5px;top:459.15999999999997px" width="30" height="30"><rect width="30" height="30" rx="5" fill="#0a8cff"/><text class="bt" x="15" y="24">2</text></svg>
<svg class="abs" style="left:1050.0px;top:459.15999999999997px" width="30" height="30"><rect width="30" height="30" rx="5" fill="#22c000"/><path class="bo" d="M6.5 23.6 L9.8 23.6 L13.5 6.4 L10.8 6.4 Q8 9.8 3.8 11.6 L3.3 13.8 Q6.4 13 8.8 11.6 Z"/><text class="bt" x="21.2" y="24">0</text></svg>
<svg class="abs" style="left:1091.5px;top:459.15999999999997px" width="30" height="30"><rect width="30" height="30" rx="5" fill="#ffff00"/><path class="bo" d="M13.3 23.6 L16.6 23.6 L20.3 6.4 L17.6 6.4 Q14.8 9.8 10.6 11.6 L10.1 13.8 Q13.2 13 15.6 11.6 Z"/></svg>
<svg class="abs" style="left:1133.0px;top:459.15999999999997px" width="30" height="30"><rect width="30" height="30" rx="5" fill="#ff0000"/><text class="bt" x="15" y="24">8</text></svg>
<svg class="abs" style="left:1174.5px;top:459.15999999999997px" width="30" height="30"><rect width="30" height="30" rx="5" fill="#6e0000"/><text class="bt" x="15" y="24">9</text></svg>
<svg class="abs" style="left:1216.0px;top:459.15999999999997px" width="30" height="30"><rect width="30" height="30" rx="5" fill="#5200ff"/><text class="bt" x="15" y="24">6</text></svg>
<svg class="abs" style="left:1257.5px;top:459.15999999999997px" width="30" height="30"><rect width="30" height="30" rx="5" fill="#4b4b4b"/><text class="bt" x="15" y="24">3</text></svg>
<div class="cell" style="left:1293.4px;width:52.0px;top:461.46px;line-height:26px;font-size:20px;color:#000">9</div>
<div class="cell" style="left:1345.4px;width:53.0px;top:463.46px;line-height:26px;font-size:21px;padding-left:1.5px;letter-spacing:-1.5px;color:#000">小</div>
<div class="cell" style="left:1398.4px;width:54.09999999999991px;top:463.46px;line-height:26px;font-size:21px;padding-left:1.5px;letter-spacing:-1.5px;color:#000">单</div>
<div class="cell" style="left:1452.5px;width:52.90000000000009px;top:463.46px;line-height:26px;font-size:21px;padding-left:1.5px;letter-spacing:-1.5px;color:#f00">龙</div>
<div class="cell" style="left:1505.4px;width:53.69999999999982px;top:463.46px;line-height:26px;font-size:21px;padding-left:1.5px;letter-spacing:-1.5px;color:#000">虎</div>
<div class="cell" style="left:1559.1px;width:53.30000000000018px;top:463.46px;line-height:26px;font-size:21px;padding-left:1.5px;letter-spacing:-1.5px;color:#000">虎</div>
<div class="cell" style="left:1612.4px;width:53.899999999999864px;top:463.46px;line-height:26px;font-size:21px;padding-left:1.5px;letter-spacing:-1.5px;color:#000">虎</div>
<div class="cell" style="left:1666.3px;width:53.299999999999955px;top:463.46px;line-height:26px;font-size:21px;padding-left:1.5px;letter-spacing:-1.5px;color:#f00">龙</div>
<div class="cell" style="left:1719.6px;width:121.0px;top:462.96px;line-height:26px;font-size:21px;letter-spacing:-1.5px;padding-left:1.5px;color:#3a1ef5">重新结算</div>
<div class="cell" style="left:1840.6px;width:90.80000000000018px;top:462.96px;line-height:26px;font-size:21px;letter-spacing:-1.5px;padding-left:1.5px;color:#3a1ef5">修改</div>
<div class="cell" style="left:1931.4px;width:90.59999999999991px;top:462.96px;line-height:26px;font-size:21px;letter-spacing:-1.5px;padding-left:1.5px;color:#3a1ef5">反结算</div>
<div class="cell" style="left:515.5px;width:135.0px;top:503.0px;line-height:26px;font-size:20.5px;color:#1f3540">20250619283</div>
<div class="cell" style="left:650.5px;width:227.89999999999998px;top:503.0px;line-height:26px;font-size:20.5px;color:#1f3540">2025-06-19 <span style="font-size:22px;letter-spacing:-0.5px;position:relative;top:1.5px">四</span> 23:35:00</div>
<svg class="abs" style="left:884.0px;top:500.7px" width="30" height="30"><rect width="30" height="30" rx="5" fill="#ffff00"/><path class="bo" d="M13.3 23.6 L16.6 23.6 L20.3 6.4 L17.6 6.4 Q14.8 9.8 10.6 11.6 L10.1 13.8 Q13.2 13 15.6 11.6 Z"/></svg>
<svg class="abs" style="left:925.5px;top:500.7px" width="30" height="30"><rect width="30" height="30" rx="5" fill="#4b4b4b"/><text class="bt" x="15" y="24">3</text></svg>
<svg class="abs" style="left:967.0px;top:500.7px" width="30" height="30"><rect width="30" height="30" rx="5" fill="#ff0000"/><text class="bt" x="15" y="24">8</text></svg>
<svg class="abs" style="left:1008.5px;top:500.7px" width="30" height="30"><rect width="30" height="30" rx="5" fill="#22c000"/><path class="bo" d="M6.5 23.6 L9.8 23.6 L13.5 6.4 L10.8 6.4 Q8 9.8 3.8 11.6 L3.3 13.8 Q6.4 13 8.8 11.6 Z"/><text class="bt" x="21.2" y="24">0</text></svg>
<svg class="abs" style="left:1050.0px;top:500.7px" width="30" height="30"><rect width="30" height="30" rx="5" fill="#5200ff"/><text class="bt" x="15" y="24">6</text></svg>
<svg class="abs" style="left:1091.5px;top:500.7px" width="30" height="30"><rect width="30" height="30" rx="5" fill="#b4b4b4"/><text class="bt" x="15" y="24">7</text></svg>
<svg class="abs" style="left:1133.0px;top:500.7px" width="30" height="30"><rect width="30" height="30" rx="5" fill="#80fcfc"/><text class="bt" x="15" y="24">5</text></svg>
<svg class="abs" style="left:1174.5px;top:500.7px" width="30" height="30"><rect width="30" height="30" rx="5" fill="#0a8cff"/><text class="bt" x="15" y="24">2</text></svg>
<svg class="abs" style="left:1216.0px;top:500.7px" width="30" height="30"><rect width="30" height="30" rx="5" fill="#6e0000"/><text class="bt" x="15" y="24">9</text></svg>
<svg class="abs" style="left:1257.5px;top:500.7px" width="30" height="30"><rect width="30" height="30" rx="5" fill="#ff7200"/><text class="bt" x="15" y="24">4</text></svg>
<div class="cell" style="left:1293.4px;width:52.0px;top:503.0px;line-height:26px;font-size:20px;color:#000">4</div>
<div class="cell" style="left:1345.4px;width:53.0px;top:505.0px;line-height:26px;font-size:21px;padding-left:1.5px;letter-spacing:-1.5px;color:#000">小</div>
<div class="cell" style="left:1398.4px;width:54.09999999999991px;top:505.0px;line-height:26px;font-size:21px;padding-left:1.5px;letter-spacing:-1.5px;color:#f00">双</div>
<div class="cell" style="left:1452.5px;width:52.90000000000009px;top:505.0px;line-height:26px;font-size:21px;padding-left:1.5px;letter-spacing:-1.5px;color:#000">虎</div>
<div class="cell" style="left:1505.4px;width:53.69999999999982px;top:505.0px;line-height:26px;font-size:21px;padding-left:1.5px;letter-spacing:-1.5px;color:#000">虎</div>
<div class="cell" style="left:1559.1px;width:53.30000000000018px;top:505.0px;line-height:26px;font-size:21px;padding-left:1.5px;letter-spacing:-1.5px;color:#f00">龙</div>
<div class="cell" style="left:1612.4px;width:53.899999999999864px;top:505.0px;line-height:26px;font-size:21px;padding-left:1.5px;letter-spacing:-1.5px;color:#f00">龙</div>
<div class="cell" style="left:1666.3px;width:53.299999999999955px;top:505.0px;line-height:26px;font-size:21px;padding-left:1.5px;letter-spacing:-1.5px;color:#000">虎</div>
<div class="cell" style="left:1719.6px;width:121.0px;top:504.5px;line-height:26px;font-size:21px;letter-spacing:-1.5px;padding-left:1.5px;color:#3a1ef5">重新结算</div>
<div class="cell" style="left:1840.6px;width:90.80000000000018px;top:504.5px;line-height:26px;font-size:21px;letter-spacing:-1.5px;padding-left:1.5px;color:#3a1ef5">修改</div>
<div class="cell" style="left:1931.4px;width:90.59999999999991px;top:504.5px;line-height:26px;font-size:21px;letter-spacing:-1.5px;padding-left:1.5px;color:#3a1ef5">反结算</div>
<div class="cell" style="left:515.5px;width:135.0px;top:544.54px;line-height:26px;font-size:20.5px;color:#1f3540">20250619282</div>
<div class="cell" style="left:650.5px;width:227.89999999999998px;top:544.54px;line-height:26px;font-size:20.5px;color:#1f3540">2025-06-19 <span style="font-size:22px;letter-spacing:-0.5px;position:relative;top:1.5px">四</span> 23:30:00</div>
<svg class="abs" style="left:884.0px;top:542.24px" width="30" height="30"><rect width="30" height="30" rx="5" fill="#ffff00"/><path class="bo" d="M13.3 23.6 L16.6 23.6 L20.3 6.4 L17.6 6.4 Q14.8 9.8 10.6 11.6 L10.1 13.8 Q13.2 13 15.6 11.6 Z"/></svg>
<svg class="abs" style="left:925.5px;top:542.24px" width="30" height="30"><rect width="30" height="30" rx="5" fill="#4b4b4b"/><text class="bt" x="15" y="24">3</text></svg>
<svg class="abs" style="left:967.0px;top:542.24px" width="30" height="30"><rect width="30" height="30" rx="5" fill="#ff7200"/><text class="bt" x="15" y="24">4</text></svg>
<svg class="abs" style="left:1008.5px;top:542.24px" width="30" height="30"><rect width="30" height="30" rx="5" fill="#6e0000"/><text class="bt" x="15" y="24">9</text></svg>
<svg class="abs" style="left:1050.0px;top:542.24px" width="30" height="30"><rect width="30" height="30" rx="5" fill="#22c000"/><path class="bo" d="M6.5 23.6 L9.8 23.6 L13.5 6.4 L10.8 6.4 Q8 9.8 3.8 11.6 L3.3 13.8 Q6.4 13 8.8 11.6 Z"/><text class="bt" x="21.2" y="24">0</text></svg>
<svg class="abs" style="left:1091.5px;top:542.24px" width="30" height="30"><rect width="30" height="30" rx="5" fill="#80fcfc"/><text class="bt" x="15" y="24">5</text></svg>
<svg class="abs" style="left:1133.0px;top:542.24px" width="30" height="30"><rect width="30" height="30" rx="5" fill="#5200ff"/><text class="bt" x="15" y="24">6</text></svg>
<svg class="abs" style="left:1174.5px;top:542.24px" width="30" height="30"><rect width="30" height="30" rx="5" fill="#0a8cff"/><text class="bt" x="15" y="24">2</text></svg>
<svg class="abs" style="left:1216.0px;top:542.24px" width="30" height="30"><rect width="30" height="30" rx="5" fill="#ff0000"/><text class="bt" x="15" y="24">8</text></svg>
<svg class="abs" style="left:1257.5px;top:542.24px" width="30" height="30"><rect width="30" height="30" rx="5" fill="#b4b4b4"/><text class="bt" x="15" y="24">7</text></svg>
<div class="cell" style="left:1293.4px;width:52.0px;top:544.54px;line-height:26px;font-size:20px;color:#000">4</div>
<div class="cell" style="left:1345.4px;width:53.0px;top:546.54px;line-height:26px;font-size:21px;padding-left:1.5px;letter-spacing:-1.5px;color:#000">小</div>
<div class="cell" style="left:1398.4px;width:54.09999999999991px;top:546.54px;line-height:26px;font-size:21px;padding-left:1.5px;letter-spacing:-1.5px;color:#f00">双</div>
<div class="cell" style="left:1452.5px;width:52.90000000000009px;top:546.54px;line-height:26px;font-size:21px;padding-left:1.5px;letter-spacing:-1.5px;color:#000">虎</div>
<div class="cell" style="left:1505.4px;width:53.69999999999982px;top:546.54px;line-height:26px;font-size:21px;padding-left:1.5px;letter-spacing:-1.5px;color:#000">虎</div>
<div class="cell" style="left:1559.1px;width:53.30000000000018px;top:546.54px;line-height:26px;font-size:21px;padding-left:1.5px;letter-spacing:-1.5px;color:#f00">龙</div>
<div class="cell" style="left:1612.4px;width:53.899999999999864px;top:546.54px;line-height:26px;font-size:21px;padding-left:1.5px;letter-spacing:-1.5px;color:#f00">龙</div>
<div class="cell" style="left:1666.3px;width:53.299999999999955px;top:546.54px;line-height:26px;font-size:21px;padding-left:1.5px;letter-spacing:-1.5px;color:#f00">龙</div>
<div class="cell" style="left:1719.6px;width:121.0px;top:546.04px;line-height:26px;font-size:21px;letter-spacing:-1.5px;padding-left:1.5px;color:#3a1ef5">重新结算</div>
<div class="cell" style="left:1840.6px;width:90.80000000000018px;top:546.04px;line-height:26px;font-size:21px;letter-spacing:-1.5px;padding-left:1.5px;color:#3a1ef5">修改</div>
<div class="cell" style="left:1931.4px;width:90.59999999999991px;top:546.04px;line-height:26px;font-size:21px;letter-spacing:-1.5px;padding-left:1.5px;color:#3a1ef5">反结算</div>
<div class="cell" style="left:515.5px;width:135.0px;top:586.08px;line-height:26px;font-size:20.5px;color:#1f3540">20250619281</div>
<div class="cell" style="left:650.5px;width:227.89999999999998px;top:586.08px;line-height:26px;font-size:20.5px;color:#1f3540">2025-06-19 <span style="font-size:22px;letter-spacing:-0.5px;position:relative;top:1.5px">四</span> 23:25:00</div>
<svg class="abs" style="left:884.0px;top:583.7800000000001px" width="30" height="30"><rect width="30" height="30" rx="5" fill="#22c000"/><path class="bo" d="M6.5 23.6 L9.8 23.6 L13.5 6.4 L10.8 6.4 Q8 9.8 3.8 11.6 L3.3 13.8 Q6.4 13 8.8 11.6 Z"/><text class="bt" x="21.2" y="24">0</text></svg>
<svg class="abs" style="left:925.5px;top:583.7800000000001px" width="30" height="30"><rect width="30" height="30" rx="5" fill="#6e0000"/><text class="bt" x="15" y="24">9</text></svg>
<svg class="abs" style="left:967.0px;top:583.7800000000001px" width="30" height="30"><rect width="30" height="30" rx="5" fill="#4b4b4b"/><text class="bt" x="15" y="24">3</text></svg>
<svg class="abs" style="left:1008.5px;top:583.7800000000001px" width="30" height="30"><rect width="30" height="30" rx="5" fill="#0a8cff"/><text class="bt" x="15" y="24">2</text></svg>
<svg class="abs" style="left:1050.0px;top:583.7800000000001px" width="30" height="30"><rect width="30" height="30" rx="5" fill="#80fcfc"/><text class="bt" x="15" y="24">5</text></svg>
<svg class="abs" style="left:1091.5px;top:583.7800000000001px" width="30" height="30"><rect width="30" height="30" rx="5" fill="#5200ff"/><text class="bt" x="15" y="24">6</text></svg>
<svg class="abs" style="left:1133.0px;top:583.7800000000001px" width="30" height="30"><rect width="30" height="30" rx="5" fill="#ff0000"/><text class="bt" x="15" y="24">8</text></svg>
<svg class="abs" style="left:1174.5px;top:583.7800000000001px" width="30" height="30"><rect width="30" height="30" rx="5" fill="#b4b4b4"/><text class="bt" x="15" y="24">7</text></svg>
<svg class="abs" style="left:1216.0px;top:583.7800000000001px" width="30" height="30"><rect width="30" height="30" rx="5" fill="#ff7200"/><text class="bt" x="15" y="24">4</text></svg>
<svg class="abs" style="left:1257.5px;top:583.7800000000001px" width="30" height="30"><rect width="30" height="30" rx="5" fill="#ffff00"/><path class="bo" d="M13.3 23.6 L16.6 23.6 L20.3 6.4 L17.6 6.4 Q14.8 9.8 10.6 11.6 L10.1 13.8 Q13.2 13 15.6 11.6 Z"/></svg>
<div class="cell" style="left:1293.4px;width:52.0px;top:586.08px;line-height:26px;font-size:20px;color:#000">19</div>
<div class="cell" style="left:1345.4px;width:53.0px;top:588.08px;line-height:26px;font-size:21px;padding-left:1.5px;letter-spacing:-1.5px;color:#f00">大</div>
<div class="cell" style="left:1398.4px;width:54.09999999999991px;top:588.08px;line-height:26px;font-size:21px;padding-left:1.5px;letter-spacing:-1.5px;color:#000">单</div>
<div class="cell" style="left:1452.5px;width:52.90000000000009px;top:588.08px;line-height:26px;font-size:21px;padding-left:1.5px;letter-spacing:-1.5px;color:#f00">龙</div>
<div class="cell" style="left:1505.4px;width:53.69999999999982px;top:588.08px;line-height:26px;font-size:21px;padding-left:1.5px;letter-spacing:-1.5px;color:#f00">龙</div>
<div class="cell" style="left:1559.1px;width:53.30000000000018px;top:588.08px;line-height:26px;font-size:21px;padding-left:1.5px;letter-spacing:-1.5px;color:#000">虎</div>
<div class="cell" style="left:1612.4px;width:53.899999999999864px;top:588.08px;line-height:26px;font-size:21px;padding-left:1.5px;letter-spacing:-1.5px;color:#000">虎</div>
<div class="cell" style="left:1666.3px;width:53.299999999999955px;top:588.08px;line-height:26px;font-size:21px;padding-left:1.5px;letter-spacing:-1.5px;color:#000">虎</div>
<div class="cell" style="left:1719.6px;width:121.0px;top:587.58px;line-height:26px;font-size:21px;letter-spacing:-1.5px;padding-left:1.5px;color:#3a1ef5">重新结算</div>
<div class="cell" style="left:1840.6px;width:90.80000000000018px;top:587.58px;line-height:26px;font-size:21px;letter-spacing:-1.5px;padding-left:1.5px;color:#3a1ef5">修改</div>
<div class="cell" style="left:1931.4px;width:90.59999999999991px;top:587.58px;line-height:26px;font-size:21px;letter-spacing:-1.5px;padding-left:1.5px;color:#3a1ef5">反结算</div>
<div class="cell" style="left:515.5px;width:135.0px;top:627.62px;line-height:26px;font-size:20.5px;color:#1f3540">20250619280</div>
<div class="cell" style="left:650.5px;width:227.89999999999998px;top:627.62px;line-height:26px;font-size:20.5px;color:#1f3540">2025-06-19 <span style="font-size:22px;letter-spacing:-0.5px;position:relative;top:1.5px">四</span> 23:20:00</div>
<svg class="abs" style="left:884.0px;top:625.32px" width="30" height="30"><rect width="30" height="30" rx="5" fill="#6e0000"/><text class="bt" x="15" y="24">9</text></svg>
<svg class="abs" style="left:925.5px;top:625.32px" width="30" height="30"><rect width="30" height="30" rx="5" fill="#22c000"/><path class="bo" d="M6.5 23.6 L9.8 23.6 L13.5 6.4 L10.8 6.4 Q8 9.8 3.8 11.6 L3.3 13.8 Q6.4 13 8.8 11.6 Z"/><text class="bt" x="21.2" y="24">0</text></svg>
<svg class="abs" style="left:967.0px;top:625.32px" width="30" height="30"><rect width="30" height="30" rx="5" fill="#0a8cff"/><text class="bt" x="15" y="24">2</text></svg>
<svg class="abs" style="left:1008.5px;top:625.32px" width="30" height="30"><rect width="30" height="30" rx="5" fill="#ff7200"/><text class="bt" x="15" y="24">4</text></svg>
<svg class="abs" style="left:1050.0px;top:625.32px" width="30" height="30"><rect width="30" height="30" rx="5" fill="#5200ff"/><text class="bt" x="15" y="24">6</text></svg>
<svg class="abs" style="left:1091.5px;top:625.32px" width="30" height="30"><rect width="30" height="30" rx="5" fill="#80fcfc"/><text class="bt" x="15" y="24">5</text></svg>
<svg class="abs" style="left:1133.0px;top:625.32px" width="30" height="30"><rect width="30" height="30" rx="5" fill="#b4b4b4"/><text class="bt" x="15" y="24">7</text></svg>
<svg class="abs" style="left:1174.5px;top:625.32px" width="30" height="30"><rect width="30" height="30" rx="5" fill="#ff0000"/><text class="bt" x="15" y="24">8</text></svg>
<svg class="abs" style="left:1216.0px;top:625.32px" width="30" height="30"><rect width="30" height="30" rx="5" fill="#ffff00"/><path class="bo" d="M13.3 23.6 L16.6 23.6 L20.3 6.4 L17.6 6.4 Q14.8 9.8 10.6 11.6 L10.1 13.8 Q13.2 13 15.6 11.6 Z"/></svg>
<svg class="abs" style="left:1257.5px;top:625.32px" width="30" height="30"><rect width="30" height="30" rx="5" fill="#4b4b4b"/><text class="bt" x="15" y="24">3</text></svg>
<div class="cell" style="left:1293.4px;width:52.0px;top:627.62px;line-height:26px;font-size:20px;color:#000">19</div>
<div class="cell" style="left:1345.4px;width:53.0px;top:629.62px;line-height:26px;font-size:21px;padding-left:1.5px;letter-spacing:-1.5px;color:#f00">大</div>
<div class="cell" style="left:1398.4px;width:54.09999999999991px;top:629.62px;line-height:26px;font-size:21px;padding-left:1.5px;letter-spacing:-1.5px;color:#000">单</div>
<div class="cell" style="left:1452.5px;width:52.90000000000009px;top:629.62px;line-height:26px;font-size:21px;padding-left:1.5px;letter-spacing:-1.5px;color:#f00">龙</div>
<div class="cell" style="left:1505.4px;width:53.69999999999982px;top:629.62px;line-height:26px;font-size:21px;padding-left:1.5px;letter-spacing:-1.5px;color:#f00">龙</div>
<div class="cell" style="left:1559.1px;width:53.30000000000018px;top:629.62px;line-height:26px;font-size:21px;padding-left:1.5px;letter-spacing:-1.5px;color:#000">虎</div>
<div class="cell" style="left:1612.4px;width:53.899999999999864px;top:629.62px;line-height:26px;font-size:21px;padding-left:1.5px;letter-spacing:-1.5px;color:#000">虎</div>
<div class="cell" style="left:1666.3px;width:53.299999999999955px;top:629.62px;line-height:26px;font-size:21px;padding-left:1.5px;letter-spacing:-1.5px;color:#f00">龙</div>
<div class="cell" style="left:1719.6px;width:121.0px;top:629.12px;line-height:26px;font-size:21px;letter-spacing:-1.5px;padding-left:1.5px;color:#3a1ef5">重新结算</div>
<div class="cell" style="left:1840.6px;width:90.80000000000018px;top:629.12px;line-height:26px;font-size:21px;letter-spacing:-1.5px;padding-left:1.5px;color:#3a1ef5">修改</div>
<div class="cell" style="left:1931.4px;width:90.59999999999991px;top:629.12px;line-height:26px;font-size:21px;letter-spacing:-1.5px;padding-left:1.5px;color:#3a1ef5">反结算</div>
<div class="cell" style="left:515.5px;width:135.0px;top:669.16px;line-height:26px;font-size:20.5px;color:#1f3540">20250619279</div>
<div class="cell" style="left:650.5px;width:227.89999999999998px;top:669.16px;line-height:26px;font-size:20.5px;color:#1f3540">2025-06-19 <span style="font-size:22px;letter-spacing:-0.5px;position:relative;top:1.5px">四</span> 23:15:00</div>
<svg class="abs" style="left:884.0px;top:666.86px" width="30" height="30"><rect width="30" height="30" rx="5" fill="#0a8cff"/><text class="bt" x="15" y="24">2</text></svg>
<svg class="abs" style="left:925.5px;top:666.86px" width="30" height="30"><rect width="30" height="30" rx="5" fill="#80fcfc"/><text class="bt" x="15" y="24">5</text></svg>
<svg class="abs" style="left:967.0px;top:666.86px" width="30" height="30"><rect width="30" height="30" rx="5" fill="#ff7200"/><text class="bt" x="15" y="24">4</text></svg>
<svg class="abs" style="left:1008.5px;top:666.86px" width="30" height="30"><rect width="30" height="30" rx="5" fill="#ffff00"/><path class="bo" d="M13.3 23.6 L16.6 23.6 L20.3 6.4 L17.6 6.4 Q14.8 9.8 10.6 11.6 L10.1 13.8 Q13.2 13 15.6 11.6 Z"/></svg>
<svg class="abs" style="left:1050.0px;top:666.86px" width="30" height="30"><rect width="30" height="30" rx="5" fill="#b4b4b4"/><text class="bt" x="15" y="24">7</text></svg>
<svg class="abs" style="left:1091.5px;top:666.86px" width="30" height="30"><rect width="30" height="30" rx="5" fill="#5200ff"/><text class="bt" x="15" y="24">6</text></svg>
<svg class="abs" style="left:1133.0px;top:666.86px" width="30" height="30"><rect width="30" height="30" rx="5" fill="#22c000"/><path class="bo" d="M6.5 23.6 L9.8 23.6 L13.5 6.4 L10.8 6.4 Q8 9.8 3.8 11.6 L3.3 13.8 Q6.4 13 8.8 11.6 Z"/><text class="bt" x="21.2" y="24">0</text></svg>
<svg class="abs" style="left:1174.5px;top:666.86px" width="30" height="30"><rect width="30" height="30" rx="5" fill="#4b4b4b"/><text class="bt" x="15" y="24">3</text></svg>
<svg class="abs" style="left:1216.0px;top:666.86px" width="30" height="30"><rect width="30" height="30" rx="5" fill="#ff0000"/><text class="bt" x="15" y="24">8</text></svg>
<svg class="abs" style="left:1257.5px;top:666.86px" width="30" height="30"><rect width="30" height="30" rx="5" fill="#6e0000"/><text class="bt" x="15" y="24">9</text></svg>
<div class="cell" style="left:1293.4px;width:52.0px;top:669.16px;line-height:26px;font-size:20px;color:#000">7</div>
<div class="cell" style="left:1345.4px;width:53.0px;top:671.16px;line-height:26px;font-size:21px;padding-left:1.5px;letter-spacing:-1.5px;color:#000">小</div>
<div class="cell" style="left:1398.4px;width:54.09999999999991px;top:671.16px;line-height:26px;font-size:21px;padding-left:1.5px;letter-spacing:-1.5px;color:#000">单</div>
<div class="cell" style="left:1452.5px;width:52.90000000000009px;top:671.16px;line-height:26px;font-size:21px;padding-left:1.5px;letter-spacing:-1.5px;color:#000">虎</div>
<div class="cell" style="left:1505.4px;width:53.69999999999982px;top:671.16px;line-height:26px;font-size:21px;padding-left:1.5px;letter-spacing:-1.5px;color:#000">虎</div>
<div class="cell" style="left:1559.1px;width:53.30000000000018px;top:671.16px;line-height:26px;font-size:21px;padding-left:1.5px;letter-spacing:-1.5px;color:#f00">龙</div>
<div class="cell" style="left:1612.4px;width:53.899999999999864px;top:671.16px;line-height:26px;font-size:21px;padding-left:1.5px;letter-spacing:-1.5px;color:#000">虎</div>
<div class="cell" style="left:1666.3px;width:53.299999999999955px;top:671.16px;line-height:26px;font-size:21px;padding-left:1.5px;letter-spacing:-1.5px;color:#f00">龙</div>
<div class="cell" style="left:1719.6px;width:121.0px;top:670.66px;line-height:26px;font-size:21px;letter-spacing:-1.5px;padding-left:1.5px;color:#3a1ef5">重新结算</div>
<div class="cell" style="left:1840.6px;width:90.80000000000018px;top:670.66px;line-height:26px;font-size:21px;letter-spacing:-1.5px;padding-left:1.5px;color:#3a1ef5">修改</div>
<div class="cell" style="left:1931.4px;width:90.59999999999991px;top:670.66px;line-height:26px;font-size:21px;letter-spacing:-1.5px;padding-left:1.5px;color:#3a1ef5">反结算</div>
<div class="cell" style="left:515.5px;width:135.0px;top:710.7px;line-height:26px;font-size:20.5px;color:#1f3540">20250619278</div>
<div class="cell" style="left:650.5px;width:227.89999999999998px;top:710.7px;line-height:26px;font-size:20.5px;color:#1f3540">2025-06-19 <span style="font-size:22px;letter-spacing:-0.5px;position:relative;top:1.5px">四</span> 23:10:00</div>
<svg class="abs" style="left:884.0px;top:708.4000000000001px" width="30" height="30"><rect width="30" height="30" rx="5" fill="#ff0000"/><text class="bt" x="15" y="24">8</text></svg>
<svg class="abs" style="left:925.5px;top:708.4000000000001px" width="30" height="30"><rect width="30" height="30" rx="5" fill="#0a8cff"/><text class="bt" x="15" y="24">2</text></svg>
<svg class="abs" style="left:967.0px;top:708.4000000000001px" width="30" height="30"><rect width="30" height="30" rx="5" fill="#5200ff"/><text class="bt" x="15" y="24">6</text></svg>
<svg class="abs" style="left:1008.5px;top:708.4000000000001px" width="30" height="30"><rect width="30" height="30" rx="5" fill="#6e0000"/><text class="bt" x="15" y="24">9</text></svg>
<svg class="abs" style="left:1050.0px;top:708.4000000000001px" width="30" height="30"><rect width="30" height="30" rx="5" fill="#ffff00"/><path class="bo" d="M13.3 23.6 L16.6 23.6 L20.3 6.4 L17.6 6.4 Q14.8 9.8 10.6 11.6 L10.1 13.8 Q13.2 13 15.6 11.6 Z"/></svg>
<svg class="abs" style="left:1091.5px;top:708.4000000000001px" width="30" height="30"><rect width="30" height="30" rx="5" fill="#b4b4b4"/><text class="bt" x="15" y="24">7</text></svg>
<svg class="abs" style="left:1133.0px;top:708.4000000000001px" width="30" height="30"><rect width="30" height="30" rx="5" fill="#22c000"/><path class="bo" d="M6.5 23.6 L9.8 23.6 L13.5 6.4 L10.8 6.4 Q8 9.8 3.8 11.6 L3.3 13.8 Q6.4 13 8.8 11.6 Z"/><text class="bt" x="21.2" y="24">0</text></svg>
<svg class="abs" style="left:1174.5px;top:708.4000000000001px" width="30" height="30"><rect width="30" height="30" rx="5" fill="#80fcfc"/><text class="bt" x="15" y="24">5</text></svg>
<svg class="abs" style="left:1216.0px;top:708.4000000000001px" width="30" height="30"><rect width="30" height="30" rx="5" fill="#ff7200"/><text class="bt" x="15" y="24">4</text></svg>
<svg class="abs" style="left:1257.5px;top:708.4000000000001px" width="30" height="30"><rect width="30" height="30" rx="5" fill="#4b4b4b"/><text class="bt" x="15" y="24">3</text></svg>
<div class="cell" style="left:1293.4px;width:52.0px;top:710.7px;line-height:26px;font-size:20px;color:#000">10</div>
<div class="cell" style="left:1345.4px;width:53.0px;top:712.7px;line-height:26px;font-size:21px;padding-left:1.5px;letter-spacing:-1.5px;color:#000">小</div>
<div class="cell" style="left:1398.4px;width:54.09999999999991px;top:712.7px;line-height:26px;font-size:21px;padding-left:1.5px;letter-spacing:-1.5px;color:#f00">双</div>
<div class="cell" style="left:1452.5px;width:52.90000000000009px;top:712.7px;line-height:26px;font-size:21px;padding-left:1.5px;letter-spacing:-1.5px;color:#f00">龙</div>
<div class="cell" style="left:1505.4px;width:53.69999999999982px;top:712.7px;line-height:26px;font-size:21px;padding-left:1.5px;letter-spacing:-1.5px;color:#000">虎</div>
<div class="cell" style="left:1559.1px;width:53.30000000000018px;top:712.7px;line-height:26px;font-size:21px;padding-left:1.5px;letter-spacing:-1.5px;color:#f00">龙</div>
<div class="cell" style="left:1612.4px;width:53.899999999999864px;top:712.7px;line-height:26px;font-size:21px;padding-left:1.5px;letter-spacing:-1.5px;color:#000">虎</div>
<div class="cell" style="left:1666.3px;width:53.299999999999955px;top:712.7px;line-height:26px;font-size:21px;padding-left:1.5px;letter-spacing:-1.5px;color:#000">虎</div>
<div class="cell" style="left:1719.6px;width:121.0px;top:712.2px;line-height:26px;font-size:21px;letter-spacing:-1.5px;padding-left:1.5px;color:#3a1ef5">重新结算</div>
<div class="cell" style="left:1840.6px;width:90.80000000000018px;top:712.2px;line-height:26px;font-size:21px;letter-spacing:-1.5px;padding-left:1.5px;color:#3a1ef5">修改</div>
<div class="cell" style="left:1931.4px;width:90.59999999999991px;top:712.2px;line-height:26px;font-size:21px;letter-spacing:-1.5px;padding-left:1.5px;color:#3a1ef5">反结算</div>
<div class="cell" style="left:515.5px;width:135.0px;top:752.24px;line-height:26px;font-size:20.5px;color:#1f3540">20250619277</div>
<div class="cell" style="left:650.5px;width:227.89999999999998px;top:752.24px;line-height:26px;font-size:20.5px;color:#1f3540">2025-06-19 <span style="font-size:22px;letter-spacing:-0.5px;position:relative;top:1.5px">四</span> 23:05:00</div>
<svg class="abs" style="left:884.0px;top:749.94px" width="30" height="30"><rect width="30" height="30" rx="5" fill="#ff0000"/><text class="bt" x="15" y="24">8</text></svg>
<svg class="abs" style="left:925.5px;top:749.94px" width="30" height="30"><rect width="30" height="30" rx="5" fill="#ff7200"/><text class="bt" x="15" y="24">4</text></svg>
<svg class="abs" style="left:967.0px;top:749.94px" width="30" height="30"><rect width="30" height="30" rx="5" fill="#80fcfc"/><text class="bt" x="15" y="24">5</text></svg>
<svg class="abs" style="left:1008.5px;top:749.94px" width="30" height="30"><rect width="30" height="30" rx="5" fill="#ffff00"/><path class="bo" d="M13.3 23.6 L16.6 23.6 L20.3 6.4 L17.6 6.4 Q14.8 9.8 10.6 11.6 L10.1 13.8 Q13.2 13 15.6 11.6 Z"/></svg>
<svg class="abs" style="left:1050.0px;top:749.94px" width="30" height="30"><rect width="30" height="30" rx="5" fill="#22c000"/><path class="bo" d="M6.5 23.6 L9.8 23.6 L13.5 6.4 L10.8 6.4 Q8 9.8 3.8 11.6 L3.3 13.8 Q6.4 13 8.8 11.6 Z"/><text class="bt" x="21.2" y="24">0</text></svg>
<svg class="abs" style="left:1091.5px;top:749.94px" width="30" height="30"><rect width="30" height="30" rx="5" fill="#5200ff"/><text class="bt" x="15" y="24">6</text></svg>
<svg class="abs" style="left:1133.0px;top:749.94px" width="30" height="30"><rect width="30" height="30" rx="5" fill="#4b4b4b"/><text class="bt" x="15" y="24">3</text></svg>
<svg class="abs" style="left:1174.5px;top:749.94px" width="30" height="30"><rect width="30" height="30" rx="5" fill="#6e0000"/><text class="bt" x="15" y="24">9</text></svg>
<svg class="abs" style="left:1216.0px;top:749.94px" width="30" height="30"><rect width="30" height="30" rx="5" fill="#b4b4b4"/><text class="bt" x="15" y="24">7</text></svg>
<svg class="abs" style="left:1257.5px;top:749.94px" width="30" height="30"><rect width="30" height="30" rx="5" fill="#0a8cff"/><text class="bt" x="15" y="24">2</text></svg>
<div class="cell" style="left:1293.4px;width:52.0px;top:752.24px;line-height:26px;font-size:20px;color:#000">12</div>
<div class="cell" style="left:1345.4px;width:53.0px;top:754.24px;line-height:26px;font-size:21px;padding-left:1.5px;letter-spacing:-1.5px;color:#f00">大</div>
<div class="cell" style="left:1398.4px;width:54.09999999999991px;top:754.24px;line-height:26px;font-size:21px;padding-left:1.5px;letter-spacing:-1.5px;color:#f00">双</div>
<div class="cell" style="left:1452.5px;width:52.90000000000009px;top:754.24px;line-height:26px;font-size:21px;padding-left:1.5px;letter-spacing:-1.5px;color:#f00">龙</div>
<div class="cell" style="left:1505.4px;width:53.69999999999982px;top:754.24px;line-height:26px;font-size:21px;padding-left:1.5px;letter-spacing:-1.5px;color:#000">虎</div>
<div class="cell" style="left:1559.1px;width:53.30000000000018px;top:754.24px;line-height:26px;font-size:21px;padding-left:1.5px;letter-spacing:-1.5px;color:#000">虎</div>
<div class="cell" style="left:1612.4px;width:53.899999999999864px;top:754.24px;line-height:26px;font-size:21px;padding-left:1.5px;letter-spacing:-1.5px;color:#000">虎</div>
<div class="cell" style="left:1666.3px;width:53.299999999999955px;top:754.24px;line-height:26px;font-size:21px;padding-left:1.5px;letter-spacing:-1.5px;color:#f00">龙</div>
<div class="cell" style="left:1719.6px;width:121.0px;top:753.74px;line-height:26px;font-size:21px;letter-spacing:-1.5px;padding-left:1.5px;color:#3a1ef5">重新结算</div>
<div class="cell" style="left:1840.6px;width:90.80000000000018px;top:753.74px;line-height:26px;font-size:21px;letter-spacing:-1.5px;padding-left:1.5px;color:#3a1ef5">修改</div>
<div class="cell" style="left:1931.4px;width:90.59999999999991px;top:753.74px;line-height:26px;font-size:21px;letter-spacing:-1.5px;padding-left:1.5px;color:#3a1ef5">反结算</div>
<div class="cell" style="left:515.5px;width:135.0px;top:793.78px;line-height:26px;font-size:20.5px;color:#1f3540">20250619276</div>
<div class="cell" style="left:650.5px;width:227.89999999999998px;top:793.78px;line-height:26px;font-size:20.5px;color:#1f3540">2025-06-19 <span style="font-size:22px;letter-spacing:-0.5px;position:relative;top:1.5px">四</span> 23:00:00</div>
<svg class="abs" style="left:884.0px;top:791.48px" width="30" height="30"><rect width="30" height="30" rx="5" fill="#ff7200"/><text class="bt" x="15" y="24">4</text></svg>
<svg class="abs" style="left:925.5px;top:791.48px" width="30" height="30"><rect width="30" height="30" rx="5" fill="#ffff00"/><path class="bo" d="M13.3 23.6 L16.6 23.6 L20.3 6.4 L17.6 6.4 Q14.8 9.8 10.6 11.6 L10.1 13.8 Q13.2 13 15.6 11.6 Z"/></svg>
<svg class="abs" style="left:967.0px;top:791.48px" width="30" height="30"><rect width="30" height="30" rx="5" fill="#5200ff"/><text class="bt" x="15" y="24">6</text></svg>
<svg class="abs" style="left:1008.5px;top:791.48px" width="30" height="30"><rect width="30" height="30" rx="5" fill="#4b4b4b"/><text class="bt" x="15" y="24">3</text></svg>
<svg class="abs" style="left:1050.0px;top:791.48px" width="30" height="30"><rect width="30" height="30" rx="5" fill="#b4b4b4"/><text class="bt" x="15" y="24">7</text></svg>
<svg class="abs" style="left:1091.5px;top:791.48px" width="30" height="30"><rect width="30" height="30" rx="5" fill="#22c000"/><path class="bo" d="M6.5 23.6 L9.8 23.6 L13.5 6.4 L10.8 6.4 Q8 9.8 3.8 11.6 L3.3 13.8 Q6.4 13 8.8 11.6 Z"/><text class="bt" x="21.2" y="24">0</text></svg>
<svg class="abs" style="left:1133.0px;top:791.48px" width="30" height="30"><rect width="30" height="30" rx="5" fill="#6e0000"/><text class="bt" x="15" y="24">9</text></svg>
<svg class="abs" style="left:1174.5px;top:791.48px" width="30" height="30"><rect width="30" height="30" rx="5" fill="#80fcfc"/><text class="bt" x="15" y="24">5</text></svg>
<svg class="abs" style="left:1216.0px;top:791.48px" width="30" height="30"><rect width="30" height="30" rx="5" fill="#ff0000"/><text class="bt" x="15" y="24">8</text></svg>
<svg class="abs" style="left:1257.5px;top:791.48px" width="30" height="30"><rect width="30" height="30" rx="5" fill="#0a8cff"/><text class="bt" x="15" y="24">2</text></svg>
<div class="cell" style="left:1293.4px;width:52.0px;top:793.78px;line-height:26px;font-size:20px;color:#000">5</div>
<div class="cell" style="left:1345.4px;width:53.0px;top:795.78px;line-height:26px;font-size:21px;padding-left:1.5px;letter-spacing:-1.5px;color:#000">小</div>
<div class="cell" style="left:1398.4px;width:54.09999999999991px;top:795.78px;line-height:26px;font-size:21px;padding-left:1.5px;letter-spacing:-1.5px;color:#000">单</div>
<div class="cell" style="left:1452.5px;width:52.90000000000009px;top:795.78px;line-height:26px;font-size:21px;padding-left:1.5px;letter-spacing:-1.5px;color:#f00">龙</div>
<div class="cell" style="left:1505.4px;width:53.69999999999982px;top:795.78px;line-height:26px;font-size:21px;padding-left:1.5px;letter-spacing:-1.5px;color:#000">虎</div>
<div class="cell" style="left:1559.1px;width:53.30000000000018px;top:795.78px;line-height:26px;font-size:21px;padding-left:1.5px;letter-spacing:-1.5px;color:#f00">龙</div>
<div class="cell" style="left:1612.4px;width:53.899999999999864px;top:795.78px;line-height:26px;font-size:21px;padding-left:1.5px;letter-spacing:-1.5px;color:#000">虎</div>
<div class="cell" style="left:1666.3px;width:53.299999999999955px;top:795.78px;line-height:26px;font-size:21px;padding-left:1.5px;letter-spacing:-1.5px;color:#000">虎</div>
<div class="cell" style="left:1719.6px;width:121.0px;top:795.28px;line-height:26px;font-size:21px;letter-spacing:-1.5px;padding-left:1.5px;color:#3a1ef5">重新结算</div>
<div class="cell" style="left:1840.6px;width:90.80000000000018px;top:795.28px;line-height:26px;font-size:21px;letter-spacing:-1.5px;padding-left:1.5px;color:#3a1ef5">修改</div>
<div class="cell" style="left:1931.4px;width:90.59999999999991px;top:795.28px;line-height:26px;font-size:21px;letter-spacing:-1.5px;padding-left:1.5px;color:#3a1ef5">反结算</div>
<div class="cell" style="left:515.5px;width:135.0px;top:835.32px;line-height:26px;font-size:20.5px;color:#1f3540">20250619275</div>
<div class="cell" style="left:650.5px;width:227.89999999999998px;top:835.32px;line-height:26px;font-size:20.5px;color:#1f3540">2025-06-19 <span style="font-size:22px;letter-spacing:-0.5px;position:relative;top:1.5px">四</span> 22:55:00</div>
<svg class="abs" style="left:884.0px;top:833.0200000000001px" width="30" height="30"><rect width="30" height="30" rx="5" fill="#80fcfc"/><text class="bt" x="15" y="24">5</text></svg>
<svg class="abs" style="left:925.5px;top:833.0200000000001px" width="30" height="30"><rect width="30" height="30" rx="5" fill="#4b4b4b"/><text class="bt" x="15" y="24">3</text></svg>
<svg class="abs" style="left:967.0px;top:833.0200000000001px" width="30" height="30"><rect width="30" height="30" rx="5" fill="#ffff00"/><path class="bo" d="M13.3 23.6 L16.6 23.6 L20.3 6.4 L17.6 6.4 Q14.8 9.8 10.6 11.6 L10.1 13.8 Q13.2 13 15.6 11.6 Z"/></svg>
<svg class="abs" style="left:1008.5px;top:833.0200000000001px" width="30" height="30"><rect width="30" height="30" rx="5" fill="#ff7200"/><text class="bt" x="15" y="24">4</text></svg>
<svg class="abs" style="left:1050.0px;top:833.0200000000001px" width="30" height="30"><rect width="30" height="30" rx="5" fill="#5200ff"/><text class="bt" x="15" y="24">6</text></svg>
<svg class="abs" style="left:1091.5px;top:833.0200000000001px" width="30" height="30"><rect width="30" height="30" rx="5" fill="#0a8cff"/><text class="bt" x="15" y="24">2</text></svg>
<svg class="abs" style="left:1133.0px;top:833.0200000000001px" width="30" height="30"><rect width="30" height="30" rx="5" fill="#6e0000"/><text class="bt" x="15" y="24">9</text></svg>
<svg class="abs" style="left:1174.5px;top:833.0200000000001px" width="30" height="30"><rect width="30" height="30" rx="5" fill="#ff0000"/><text class="bt" x="15" y="24">8</text></svg>
<svg class="abs" style="left:1216.0px;top:833.0200000000001px" width="30" height="30"><rect width="30" height="30" rx="5" fill="#22c000"/><path class="bo" d="M6.5 23.6 L9.8 23.6 L13.5 6.4 L10.8 6.4 Q8 9.8 3.8 11.6 L3.3 13.8 Q6.4 13 8.8 11.6 Z"/><text class="bt" x="21.2" y="24">0</text></svg>
<svg class="abs" style="left:1257.5px;top:833.0200000000001px" width="30" height="30"><rect width="30" height="30" rx="5" fill="#b4b4b4"/><text class="bt" x="15" y="24">7</text></svg>
<div class="cell" style="left:1293.4px;width:52.0px;top:835.32px;line-height:26px;font-size:20px;color:#000">8</div>
<div class="cell" style="left:1345.4px;width:53.0px;top:837.32px;line-height:26px;font-size:21px;padding-left:1.5px;letter-spacing:-1.5px;color:#000">小</div>
<div class="cell" style="left:1398.4px;width:54.09999999999991px;top:837.32px;line-height:26px;font-size:21px;padding-left:1.5px;letter-spacing:-1.5px;color:#f00">双</div>
<div class="cell" style="left:1452.5px;width:52.90000000000009px;top:837.32px;line-height:26px;font-size:21px;padding-left:1.5px;letter-spacing:-1.5px;color:#000">虎</div>
<div class="cell" style="left:1505.4px;width:53.69999999999982px;top:837.32px;line-height:26px;font-size:21px;padding-left:1.5px;letter-spacing:-1.5px;color:#000">虎</div>
<div class="cell" style="left:1559.1px;width:53.30000000000018px;top:837.32px;line-height:26px;font-size:21px;padding-left:1.5px;letter-spacing:-1.5px;color:#000">虎</div>
<div class="cell" style="left:1612.4px;width:53.899999999999864px;top:837.32px;line-height:26px;font-size:21px;padding-left:1.5px;letter-spacing:-1.5px;color:#000">虎</div>
<div class="cell" style="left:1666.3px;width:53.299999999999955px;top:837.32px;line-height:26px;font-size:21px;padding-left:1.5px;letter-spacing:-1.5px;color:#f00">龙</div>
<div class="cell" style="left:1719.6px;width:121.0px;top:836.82px;line-height:26px;font-size:21px;letter-spacing:-1.5px;padding-left:1.5px;color:#3a1ef5">重新结算</div>
<div class="cell" style="left:1840.6px;width:90.80000000000018px;top:836.82px;line-height:26px;font-size:21px;letter-spacing:-1.5px;padding-left:1.5px;color:#3a1ef5">修改</div>
<div class="cell" style="left:1931.4px;width:90.59999999999991px;top:836.82px;line-height:26px;font-size:21px;letter-spacing:-1.5px;padding-left:1.5px;color:#3a1ef5">反结算</div>
<div class="cell" style="left:515.5px;width:135.0px;top:876.86px;line-height:26px;font-size:20.5px;color:#1f3540">20250619274</div>
<div class="cell" style="left:650.5px;width:227.89999999999998px;top:876.86px;line-height:26px;font-size:20.5px;color:#1f3540">2025-06-19 <span style="font-size:22px;letter-spacing:-0.5px;position:relative;top:1.5px">四</span> 22:50:00</div>
<svg class="abs" style="left:884.0px;top:874.5600000000001px" width="30" height="30"><rect width="30" height="30" rx="5" fill="#22c000"/><path class="bo" d="M6.5 23.6 L9.8 23.6 L13.5 6.4 L10.8 6.4 Q8 9.8 3.8 11.6 L3.3 13.8 Q6.4 13 8.8 11.6 Z"/><text class="bt" x="21.2" y="24">0</text></svg>
<svg class="abs" style="left:925.5px;top:874.5600000000001px" width="30" height="30"><rect width="30" height="30" rx="5" fill="#ff7200"/><text class="bt" x="15" y="24">4</text></svg>
<svg class="abs" style="left:967.0px;top:874.5600000000001px" width="30" height="30"><rect width="30" height="30" rx="5" fill="#4b4b4b"/><text class="bt" x="15" y="24">3</text></svg>
<svg class="abs" style="left:1008.5px;top:874.5600000000001px" width="30" height="30"><rect width="30" height="30" rx="5" fill="#ffff00"/><path class="bo" d="M13.3 23.6 L16.6 23.6 L20.3 6.4 L17.6 6.4 Q14.8 9.8 10.6 11.6 L10.1 13.8 Q13.2 13 15.6 11.6 Z"/></svg>
<svg class="abs" style="left:1050.0px;top:874.5600000000001px" width="30" height="30"><rect width="30" height="30" rx="5" fill="#b4b4b4"/><text class="bt" x="15" y="24">7</text></svg>
<svg class="abs" style="left:1091.5px;top:874.5600000000001px" width="30" height="30"><rect width="30" height="30" rx="5" fill="#ff0000"/><text class="bt" x="15" y="24">8</text></svg>
<svg class="abs" style="left:1133.0px;top:874.5600000000001px" width="30" height="30"><rect width="30" height="30" rx="5" fill="#0a8cff"/><text class="bt" x="15" y="24">2</text></svg>
<svg class="abs" style="left:1174.5px;top:874.5600000000001px" width="30" height="30"><rect width="30" height="30" rx="5" fill="#6e0000"/><text class="bt" x="15" y="24">9</text></svg>
<svg class="abs" style="left:1216.0px;top:874.5600000000001px" width="30" height="30"><rect width="30" height="30" rx="5" fill="#80fcfc"/><text class="bt" x="15" y="24">5</text></svg>
<svg class="abs" style="left:1257.5px;top:874.5600000000001px" width="30" height="30"><rect width="30" height="30" rx="5" fill="#5200ff"/><text class="bt" x="15" y="24">6</text></svg>
<div class="cell" style="left:1293.4px;width:52.0px;top:876.86px;line-height:26px;font-size:20px;color:#000">14</div>
<div class="cell" style="left:1345.4px;width:53.0px;top:878.86px;line-height:26px;font-size:21px;padding-left:1.5px;letter-spacing:-1.5px;color:#f00">大</div>
<div class="cell" style="left:1398.4px;width:54.09999999999991px;top:878.86px;line-height:26px;font-size:21px;padding-left:1.5px;letter-spacing:-1.5px;color:#f00">双</div>
<div class="cell" style="left:1452.5px;width:52.90000000000009px;top:878.86px;line-height:26px;font-size:21px;padding-left:1.5px;letter-spacing:-1.5px;color:#f00">龙</div>
<div class="cell" style="left:1505.4px;width:53.69999999999982px;top:878.86px;line-height:26px;font-size:21px;padding-left:1.5px;letter-spacing:-1.5px;color:#000">虎</div>
<div class="cell" style="left:1559.1px;width:53.30000000000018px;top:878.86px;line-height:26px;font-size:21px;padding-left:1.5px;letter-spacing:-1.5px;color:#000">虎</div>
<div class="cell" style="left:1612.4px;width:53.899999999999864px;top:878.86px;line-height:26px;font-size:21px;padding-left:1.5px;letter-spacing:-1.5px;color:#000">虎</div>
<div class="cell" style="left:1666.3px;width:53.299999999999955px;top:878.86px;line-height:26px;font-size:21px;padding-left:1.5px;letter-spacing:-1.5px;color:#000">虎</div>
<div class="cell" style="left:1719.6px;width:121.0px;top:878.36px;line-height:26px;font-size:21px;letter-spacing:-1.5px;padding-left:1.5px;color:#3a1ef5">重新结算</div>
<div class="cell" style="left:1840.6px;width:90.80000000000018px;top:878.36px;line-height:26px;font-size:21px;letter-spacing:-1.5px;padding-left:1.5px;color:#3a1ef5">修改</div>
<div class="cell" style="left:1931.4px;width:90.59999999999991px;top:878.36px;line-height:26px;font-size:21px;letter-spacing:-1.5px;padding-left:1.5px;color:#3a1ef5">反结算</div>
<div class="cell" style="left:515.5px;width:135.0px;top:918.4px;line-height:26px;font-size:20.5px;color:#1f3540">20250619273</div>
<div class="cell" style="left:650.5px;width:227.89999999999998px;top:918.4px;line-height:26px;font-size:20.5px;color:#1f3540">2025-06-19 <span style="font-size:22px;letter-spacing:-0.5px;position:relative;top:1.5px">四</span> 22:45:00</div>
<svg class="abs" style="left:884.0px;top:916.1px" width="30" height="30"><rect width="30" height="30" rx="5" fill="#80fcfc"/><text class="bt" x="15" y="24">5</text></svg>
<svg class="abs" style="left:925.5px;top:916.1px" width="30" height="30"><rect width="30" height="30" rx="5" fill="#ffff00"/><path class="bo" d="M13.3 23.6 L16.6 23.6 L20.3 6.4 L17.6 6.4 Q14.8 9.8 10.6 11.6 L10.1 13.8 Q13.2 13 15.6 11.6 Z"/></svg>
<svg class="abs" style="left:967.0px;top:916.1px" width="30" height="30"><rect width="30" height="30" rx="5" fill="#ff7200"/><text class="bt" x="15" y="24">4</text></svg>
<svg class="abs" style="left:1008.5px;top:916.1px" width="30" height="30"><rect width="30" height="30" rx="5" fill="#6e0000"/><text class="bt" x="15" y="24">9</text></svg>
<svg class="abs" style="left:1050.0px;top:916.1px" width="30" height="30"><rect width="30" height="30" rx="5" fill="#ff0000"/><text class="bt" x="15" y="24">8</text></svg>
<svg class="abs" style="left:1091.5px;top:916.1px" width="30" height="30"><rect width="30" height="30" rx="5" fill="#b4b4b4"/><text class="bt" x="15" y="24">7</text></svg>
<svg class="abs" style="left:1133.0px;top:916.1px" width="30" height="30"><rect width="30" height="30" rx="5" fill="#0a8cff"/><text class="bt" x="15" y="24">2</text></svg>
<svg class="abs" style="left:1174.5px;top:916.1px" width="30" height="30"><rect width="30" height="30" rx="5" fill="#4b4b4b"/><text class="bt" x="15" y="24">3</text></svg>
<svg class="abs" style="left:1216.0px;top:916.1px" width="30" height="30"><rect width="30" height="30" rx="5" fill="#5200ff"/><text class="bt" x="15" y="24">6</text></svg>
<svg class="abs" style="left:1257.5px;top:916.1px" width="30" height="30"><rect width="30" height="30" rx="5" fill="#22c000"/><path class="bo" d="M6.5 23.6 L9.8 23.6 L13.5 6.4 L10.8 6.4 Q8 9.8 3.8 11.6 L3.3 13.8 Q6.4 13 8.8 11.6 Z"/><text class="bt" x="21.2" y="24">0</text></svg>
<div class="cell" style="left:1293.4px;width:52.0px;top:918.4px;line-height:26px;font-size:20px;color:#000">6</div>
<div class="cell" style="left:1345.4px;width:53.0px;top:920.4px;line-height:26px;font-size:21px;padding-left:1.5px;letter-spacing:-1.5px;color:#000">小</div>
<div class="cell" style="left:1398.4px;width:54.09999999999991px;top:920.4px;line-height:26px;font-size:21px;padding-left:1.5px;letter-spacing:-1.5px;color:#f00">双</div>
<div class="cell" style="left:1452.5px;width:52.90000000000009px;top:920.4px;line-height:26px;font-size:21px;padding-left:1.5px;letter-spacing:-1.5px;color:#000">虎</div>
<div class="cell" style="left:1505.4px;width:53.69999999999982px;top:920.4px;line-height:26px;font-size:21px;padding-left:1.5px;letter-spacing:-1.5px;color:#000">虎</div>
<div class="cell" style="left:1559.1px;width:53.30000000000018px;top:920.4px;line-height:26px;font-size:21px;padding-left:1.5px;letter-spacing:-1.5px;color:#f00">龙</div>
<div class="cell" style="left:1612.4px;width:53.899999999999864px;top:920.4px;line-height:26px;font-size:21px;padding-left:1.5px;letter-spacing:-1.5px;color:#f00">龙</div>
<div class="cell" style="left:1666.3px;width:53.299999999999955px;top:920.4px;line-height:26px;font-size:21px;padding-left:1.5px;letter-spacing:-1.5px;color:#f00">龙</div>
<div class="cell" style="left:1719.6px;width:121.0px;top:919.9px;line-height:26px;font-size:21px;letter-spacing:-1.5px;padding-left:1.5px;color:#3a1ef5">重新结算</div>
<div class="cell" style="left:1840.6px;width:90.80000000000018px;top:919.9px;line-height:26px;font-size:21px;letter-spacing:-1.5px;padding-left:1.5px;color:#3a1ef5">修改</div>
<div class="cell" style="left:1931.4px;width:90.59999999999991px;top:919.9px;line-height:26px;font-size:21px;letter-spacing:-1.5px;padding-left:1.5px;color:#3a1ef5">反结算</div>
<div class="cell" style="left:515.5px;width:135.0px;top:959.94px;line-height:26px;font-size:20.5px;color:#1f3540">20250619272</div>
<div class="cell" style="left:650.5px;width:227.89999999999998px;top:959.94px;line-height:26px;font-size:20.5px;color:#1f3540">2025-06-19 <span style="font-size:22px;letter-spacing:-0.5px;position:relative;top:1.5px">四</span> 22:40:00</div>
<svg class="abs" style="left:884.0px;top:957.6400000000001px" width="30" height="30"><rect width="30" height="30" rx="5" fill="#80fcfc"/><text class="bt" x="15" y="24">5</text></svg>
<svg class="abs" style="left:925.5px;top:957.6400000000001px" width="30" height="30"><rect width="30" height="30" rx="5" fill="#ff7200"/><text class="bt" x="15" y="24">4</text></svg>
<svg class="abs" style="left:967.0px;top:957.6400000000001px" width="30" height="30"><rect width="30" height="30" rx="5" fill="#22c000"/><path class="bo" d="M6.5 23.6 L9.8 23.6 L13.5 6.4 L10.8 6.4 Q8 9.8 3.8 11.6 L3.3 13.8 Q6.4 13 8.8 11.6 Z"/><text class="bt" x="21.2" y="24">0</text></svg>
<svg class="abs" style="left:1008.5px;top:957.6400000000001px" width="30" height="30"><rect width="30" height="30" rx="5" fill="#4b4b4b"/><text class="bt" x="15" y="24">3</text></svg>
<svg class="abs" style="left:1050.0px;top:957.6400000000001px" width="30" height="30"><rect width="30" height="30" rx="5" fill="#ffff00"/><path class="bo" d="M13.3 23.6 L16.6 23.6 L20.3 6.4 L17.6 6.4 Q14.8 9.8 10.6 11.6 L10.1 13.8 Q13.2 13 15.6 11.6 Z"/></svg>
<svg class="abs" style="left:1091.5px;top:957.6400000000001px" width="30" height="30"><rect width="30" height="30" rx="5" fill="#0a8cff"/><text class="bt" x="15" y="24">2</text></svg>
<svg class="abs" style="left:1133.0px;top:957.6400000000001px" width="30" height="30"><rect width="30" height="30" rx="5" fill="#5200ff"/><text class="bt" x="15" y="24">6</text></svg>
<svg class="abs" style="left:1174.5px;top:957.6400000000001px" width="30" height="30"><rect width="30" height="30" rx="5" fill="#ff0000"/><text class="bt" x="15" y="24">8</text></svg>
<svg class="abs" style="left:1216.0px;top:957.6400000000001px" width="30" height="30"><rect width="30" height="30" rx="5" fill="#b4b4b4"/><text class="bt" x="15" y="24">7</text></svg>
<svg class="abs" style="left:1257.5px;top:957.6400000000001px" width="30" height="30"><rect width="30" height="30" rx="5" fill="#6e0000"/><text class="bt" x="15" y="24">9</text></svg>
<div class="cell" style="left:1293.4px;width:52.0px;top:959.94px;line-height:26px;font-size:20px;color:#000">9</div>
<div class="cell" style="left:1345.4px;width:53.0px;top:961.94px;line-height:26px;font-size:21px;padding-left:1.5px;letter-spacing:-1.5px;color:#000">小</div>
<div class="cell" style="left:1398.4px;width:54.09999999999991px;top:961.94px;line-height:26px;font-size:21px;padding-left:1.5px;letter-spacing:-1.5px;color:#000">单</div>
<div class="cell" style="left:1452.5px;width:52.90000000000009px;top:961.94px;line-height:26px;font-size:21px;padding-left:1.5px;letter-spacing:-1.5px;color:#000">虎</div>
<div class="cell" style="left:1505.4px;width:53.69999999999982px;top:961.94px;line-height:26px;font-size:21px;padding-left:1.5px;letter-spacing:-1.5px;color:#000">虎</div>
<div class="cell" style="left:1559.1px;width:53.30000000000018px;top:961.94px;line-height:26px;font-size:21px;padding-left:1.5px;letter-spacing:-1.5px;color:#f00">龙</div>
<div class="cell" style="left:1612.4px;width:53.899999999999864px;top:961.94px;line-height:26px;font-size:21px;padding-left:1.5px;letter-spacing:-1.5px;color:#000">虎</div>
<div class="cell" style="left:1666.3px;width:53.299999999999955px;top:961.94px;line-height:26px;font-size:21px;padding-left:1.5px;letter-spacing:-1.5px;color:#000">虎</div>
<div class="cell" style="left:1719.6px;width:121.0px;top:961.44px;line-height:26px;font-size:21px;letter-spacing:-1.5px;padding-left:1.5px;color:#3a1ef5">重新结算</div>
<div class="cell" style="left:1840.6px;width:90.80000000000018px;top:961.44px;line-height:26px;font-size:21px;letter-spacing:-1.5px;padding-left:1.5px;color:#3a1ef5">修改</div>
<div class="cell" style="left:1931.4px;width:90.59999999999991px;top:961.44px;line-height:26px;font-size:21px;letter-spacing:-1.5px;padding-left:1.5px;color:#3a1ef5">反结算</div>
<div class="cell" style="left:515.5px;width:135.0px;top:1001.48px;line-height:26px;font-size:20.5px;color:#1f3540">20250619271</div>
<div class="cell" style="left:650.5px;width:227.89999999999998px;top:1001.48px;line-height:26px;font-size:20.5px;color:#1f3540">2025-06-19 <span style="font-size:22px;letter-spacing:-0.5px;position:relative;top:1.5px">四</span> 22:35:00</div>
<svg class="abs" style="left:884.0px;top:999.1800000000001px" width="30" height="30"><rect width="30" height="30" rx="5" fill="#ff7200"/><text class="bt" x="15" y="24">4</text></svg>
<svg class="abs" style="left:925.5px;top:999.1800000000001px" width="30" height="30"><rect width="30" height="30" rx="5" fill="#80fcfc"/><text class="bt" x="15" y="24">5</text></svg>
<svg class="abs" style="left:967.0px;top:999.1800000000001px" width="30" height="30"><rect width="30" height="30" rx="5" fill="#22c000"/><path class="bo" d="M6.5 23.6 L9.8 23.6 L13.5 6.4 L10.8 6.4 Q8 9.8 3.8 11.6 L3.3 13.8 Q6.4 13 8.8 11.6 Z"/><text class="bt" x="21.2" y="24">0</text></svg>
<svg class="abs" style="left:1008.5px;top:999.1800000000001px" width="30" height="30"><rect width="30" height="30" rx="5" fill="#6e0000"/><text class="bt" x="15" y="24">9</text></svg>
<svg class="abs" style="left:1050.0px;top:999.1800000000001px" width="30" height="30"><rect width="30" height="30" rx="5" fill="#0a8cff"/><text class="bt" x="15" y="24">2</text></svg>
<svg class="abs" style="left:1091.5px;top:999.1800000000001px" width="30" height="30"><rect width="30" height="30" rx="5" fill="#4b4b4b"/><text class="bt" x="15" y="24">3</text></svg>
<svg class="abs" style="left:1133.0px;top:999.1800000000001px" width="30" height="30"><rect width="30" height="30" rx="5" fill="#5200ff"/><text class="bt" x="15" y="24">6</text></svg>
<svg class="abs" style="left:1174.5px;top:999.1800000000001px" width="30" height="30"><rect width="30" height="30" rx="5" fill="#ff0000"/><text class="bt" x="15" y="24">8</text></svg>
<svg class="abs" style="left:1216.0px;top:999.1800000000001px" width="30" height="30"><rect width="30" height="30" rx="5" fill="#b4b4b4"/><text class="bt" x="15" y="24">7</text></svg>
<svg class="abs" style="left:1257.5px;top:999.1800000000001px" width="30" height="30"><rect width="30" height="30" rx="5" fill="#ffff00"/><path class="bo" d="M13.3 23.6 L16.6 23.6 L20.3 6.4 L17.6 6.4 Q14.8 9.8 10.6 11.6 L10.1 13.8 Q13.2 13 15.6 11.6 Z"/></svg>
<div class="cell" style="left:1293.4px;width:52.0px;top:1001.48px;line-height:26px;font-size:20px;color:#000">9</div>
<div class="cell" style="left:1345.4px;width:53.0px;top:1003.48px;line-height:26px;font-size:21px;padding-left:1.5px;letter-spacing:-1.5px;color:#000">小</div>
<div class="cell" style="left:1398.4px;width:54.09999999999991px;top:1003.48px;line-height:26px;font-size:21px;padding-left:1.5px;letter-spacing:-1.5px;color:#000">单</div>
<div class="cell" style="left:1452.5px;width:52.90000000000009px;top:1003.48px;line-height:26px;font-size:21px;padding-left:1.5px;letter-spacing:-1.5px;color:#f00">龙</div>
<div class="cell" style="left:1505.4px;width:53.69999999999982px;top:1003.48px;line-height:26px;font-size:21px;padding-left:1.5px;letter-spacing:-1.5px;color:#000">虎</div>
<div class="cell" style="left:1559.1px;width:53.30000000000018px;top:1003.48px;line-height:26px;font-size:21px;padding-left:1.5px;letter-spacing:-1.5px;color:#f00">龙</div>
<div class="cell" style="left:1612.4px;width:53.899999999999864px;top:1003.48px;line-height:26px;font-size:21px;padding-left:1.5px;letter-spacing:-1.5px;color:#f00">龙</div>
<div class="cell" style="left:1666.3px;width:53.299999999999955px;top:1003.48px;line-height:26px;font-size:21px;padding-left:1.5px;letter-spacing:-1.5px;color:#000">虎</div>
<div class="cell" style="left:1719.6px;width:121.0px;top:1002.98px;line-height:26px;font-size:21px;letter-spacing:-1.5px;padding-left:1.5px;color:#3a1ef5">重新结算</div>
<div class="cell" style="left:1840.6px;width:90.80000000000018px;top:1002.98px;line-height:26px;font-size:21px;letter-spacing:-1.5px;padding-left:1.5px;color:#3a1ef5">修改</div>
<div class="cell" style="left:1931.4px;width:90.59999999999991px;top:1002.98px;line-height:26px;font-size:21px;letter-spacing:-1.5px;padding-left:1.5px;color:#3a1ef5">反结算</div>
</div>
<div class="abs" style="left:0;top:140px;width:1px;height:1018px;background:#c4c4c4"></div>
<div class="abs" style="left:2537px;top:140px;width:1px;height:1018px;background:#c4c4c4"></div>
<div id="sb">
<svg class="abs" style="left:3px;top:7px" width="16" height="10"><path d="M1 9 L8 1 L15 9 Z" fill="#898989"/></svg>
<div class="abs" style="left:5px;top:27px;width:13px;height:127px;border-radius:7px;background:#8a8a8a"></div>
<svg class="abs" style="left:3px;top:1049px" width="16" height="10"><path d="M1 1 L8 9 L15 1 Z" fill="#898989"/></svg>
</div>
<div id="foot">
<div class="abs" style="left:-17px;top:9px;font-size:21px;letter-spacing:-1.5px;line-height:24px;color:#3d5aa8;white-space:nowrap">经，造成损失需平台自行负责，我司一概不负任何责任，请悉知。</div>
<div class="abs" style="left:2494px;top:9px;font-size:21px;letter-spacing:-1.5px;line-height:24px;color:#2a2aff">更多</div>
</div>
</body></html>
